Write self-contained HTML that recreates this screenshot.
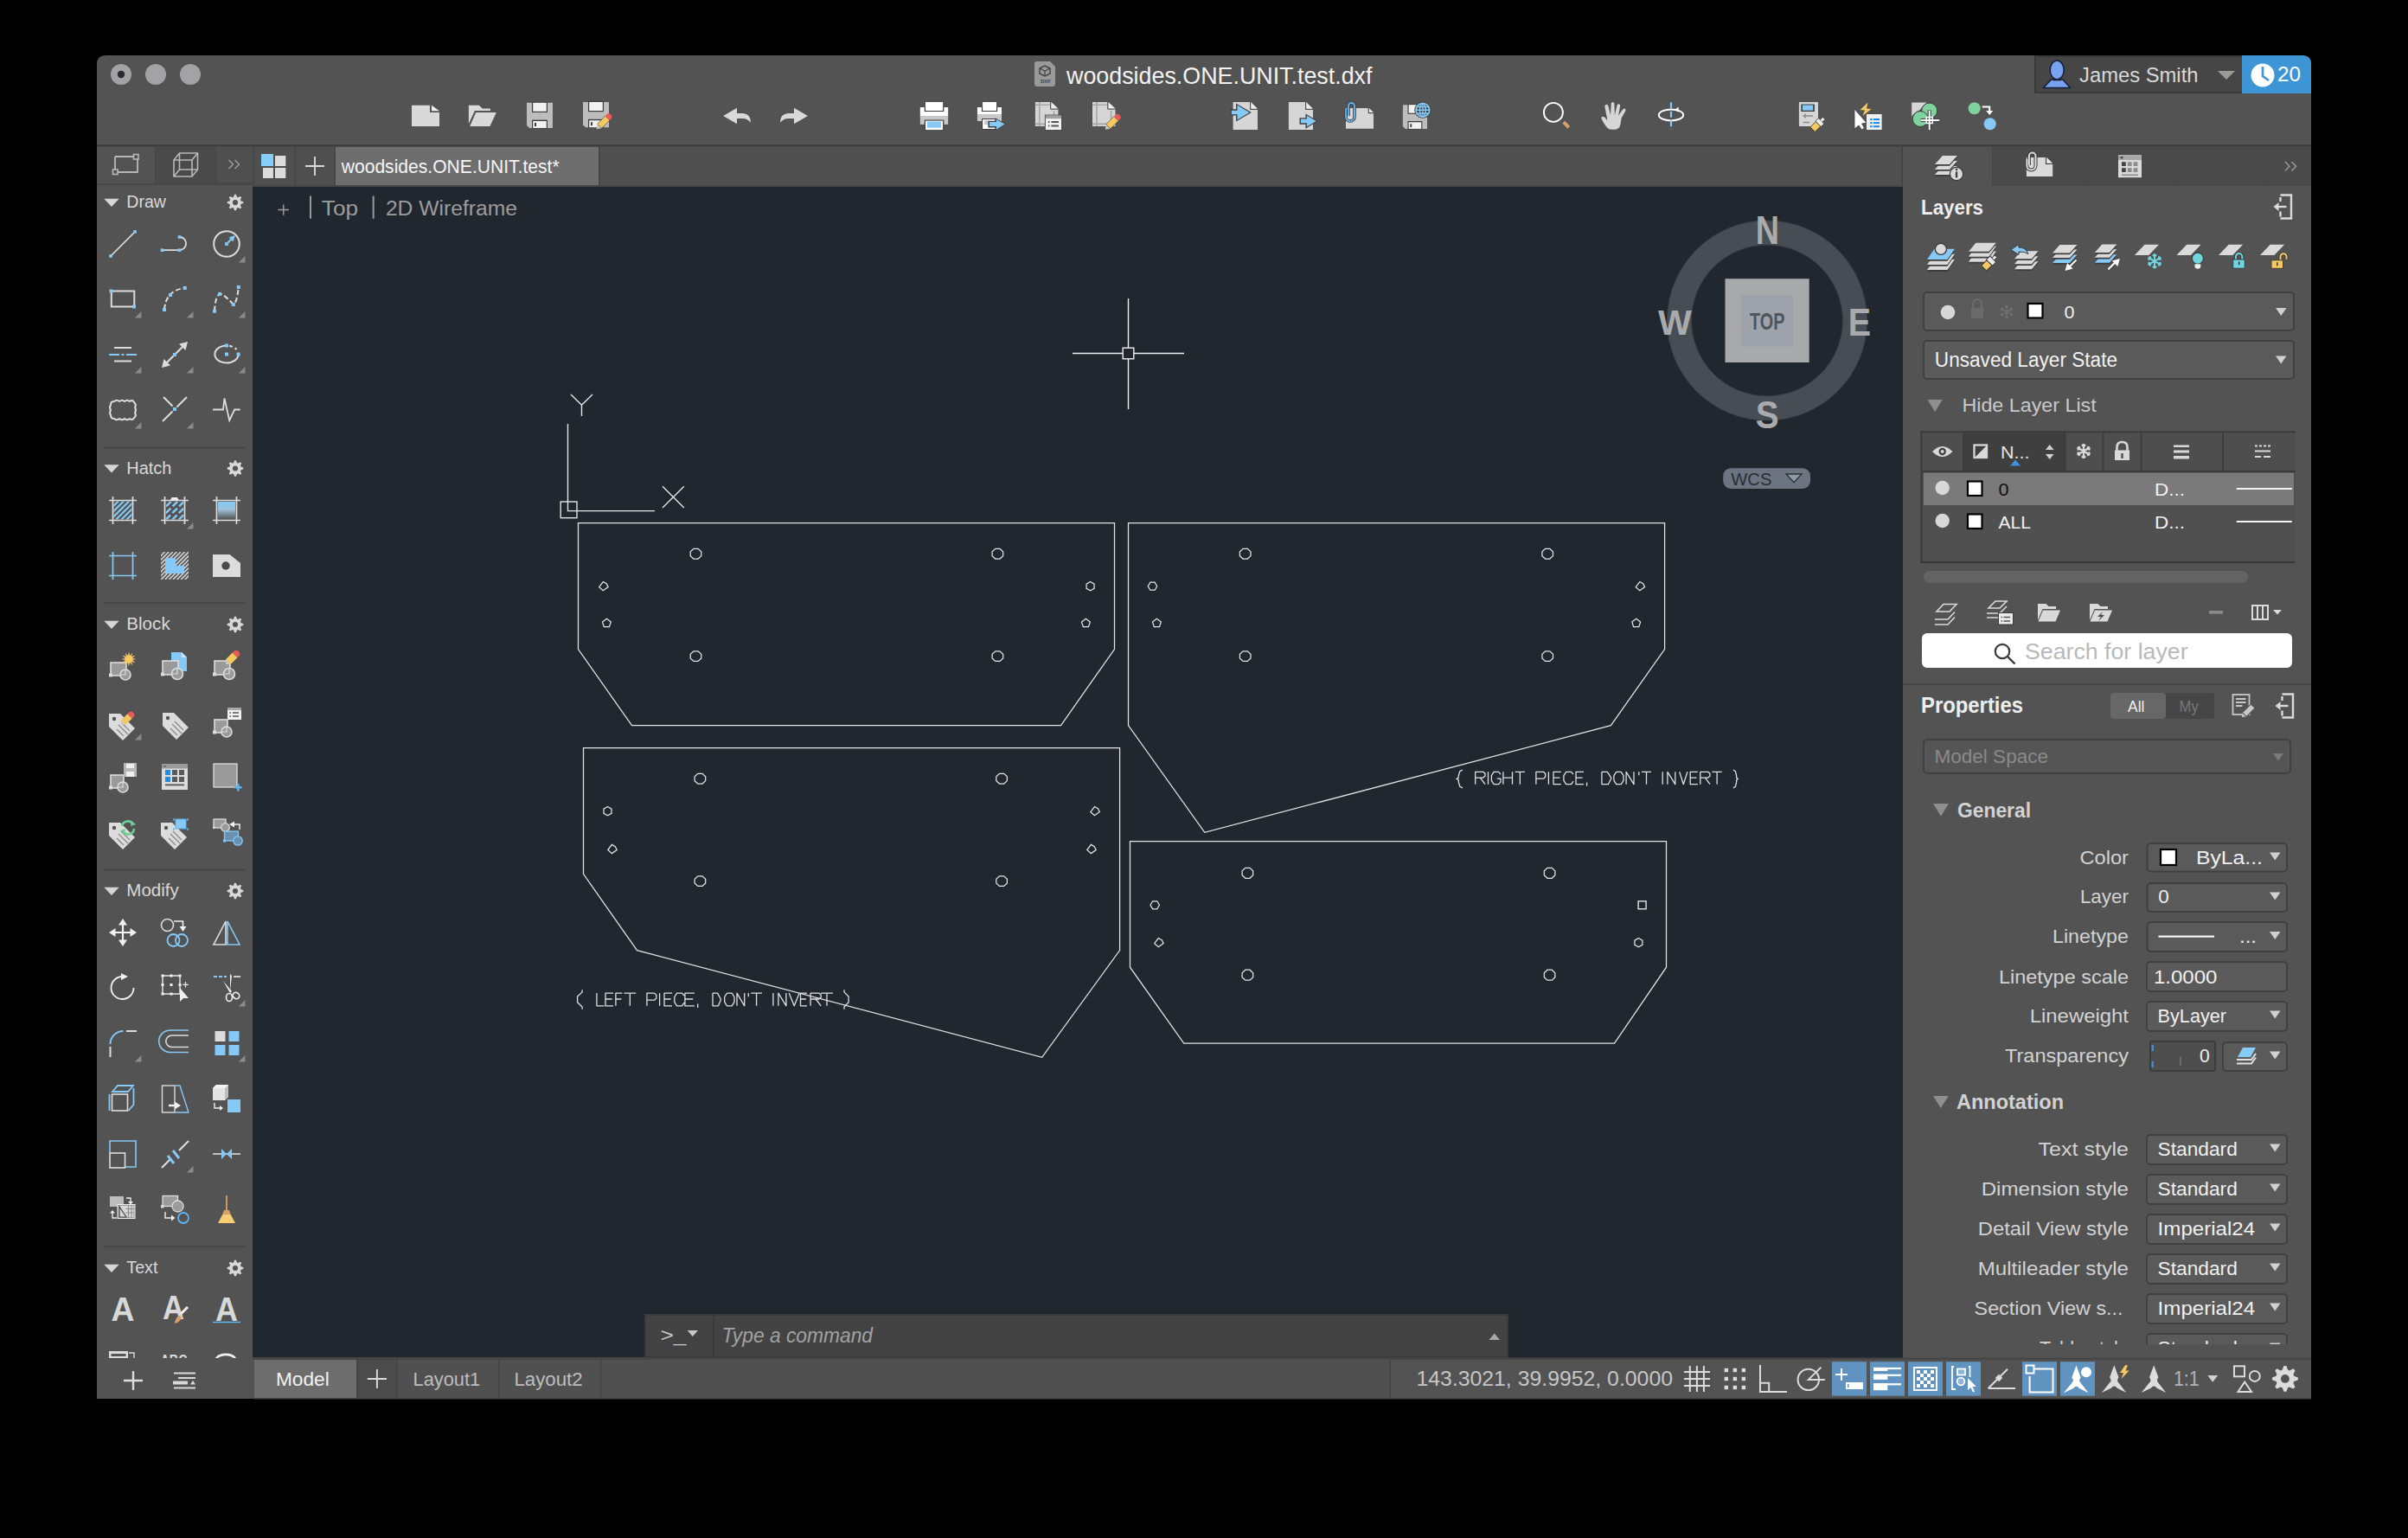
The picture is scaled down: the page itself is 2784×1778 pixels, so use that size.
<!DOCTYPE html>
<html><head><meta charset="utf-8"><style>
html,body{margin:0;padding:0;background:#000;width:#ffffffpx;height:1778px;overflow:hidden}
svg{display:block}
</style></head><body>
<svg width="#ffffff" height="1778" viewBox="0 0 #ffffff 1778">
<rect width="#ffffff" height="1778" fill="#000"/>
<path d="M112,74 Q112,64 122,64 L2662,64 Q2672,64 2672,74 L2672,1617 L112,1617 Z" fill="#535353"/><circle cx="140" cy="86" r="12" fill="#a3a2a6"/><circle cx="180" cy="86" r="12" fill="#a3a2a6"/><circle cx="220" cy="86" r="12" fill="#a3a2a6"/><circle cx="140" cy="86" r="4.2" fill="#2b2b2f"/><path d="M1196,74 Q1196,71 1199,71 L1214,71 L1220,77 L1220,97 Q1220,100 1217,100 L1199,100 Q1196,100 1196,97 Z" fill="#9a9a9a"/><path d="M1202,79 L1208,76 L1214,79 L1214,85 L1208,88 L1202,85 Z" fill="none" stroke="#444" stroke-width="1.5"/><path d="M1202,79 L1208,82 L1214,79 M1208,82 L1208,88" fill="none" stroke="#444" stroke-width="1.2"/><text x="1203" y="96" font-family="Liberation Sans" font-size="6" fill="#444" font-weight="bold" textLength="12" lengthAdjust="spacingAndGlyphs" >DXF</text><text x="1233" y="96.6" font-family="Liberation Sans" font-size="27.5" fill="#f2f2f2" textLength="353.5" lengthAdjust="spacingAndGlyphs" >woodsides.ONE.UNIT.test.dxf</text><rect x="2352" y="64" width="240" height="44" fill="#3a3a3a" /><rect x="2354" y="66" width="238" height="40" fill="#464646" /><path d="M2362.5,101.5 L2371.5,92 L2385,92 L2393.5,101.5 Z" fill="#78a2f0" stroke="#16213a" stroke-width="1.6"/><ellipse cx="2378.2" cy="81" rx="8" ry="11" fill="#78a2f0" stroke="#16213a" stroke-width="1.6"/><path d="M2373.5,92.5 L2383,92.5" stroke="#16213a" stroke-width="1.6"/><text x="2404" y="94.8" font-family="Liberation Sans" font-size="24.5" fill="#d9d9d9" textLength="137.5" lengthAdjust="spacingAndGlyphs" >James Smith</text><path d="M2564,82 L2584,82 L2574,92 Z" fill="#9a9a9a"/><path d="M2592,64 L2662,64 Q2672,64 2672,74 L2672,108 L2592,108 Z" fill="#3e95d5"/><circle cx="2616" cy="87" r="13.5" fill="#fff"/><path d="M2616,77 L2616,88 L2623,93" fill="none" stroke="#3e95d5" stroke-width="2.6"/><text x="2633" y="93.6" font-family="Liberation Sans" font-size="24" fill="#ffffff" textLength="27" lengthAdjust="spacingAndGlyphs" >20</text><rect x="112" y="167" width="2560" height="2" fill="#3e3e3e" /><rect x="112" y="169" width="2560" height="47" fill="#474747" /><rect x="694" y="170" width="1506" height="44" fill="#505050" /><rect x="112" y="170" width="67" height="42" fill="#535353" /><rect x="180" y="170" width="69" height="41" fill="#4a4a4a" /><rect x="250" y="170" width="42" height="41" fill="#4f4f4f" /><rect x="294" y="170" width="46" height="44" fill="#4f4f4f" /><rect x="342" y="170" width="44" height="44" fill="#4f4f4f" /><rect x="388" y="170" width="304" height="44" fill="#6e6e6e" /><text x="394.7" y="200.4" font-family="Liberation Sans" font-size="22.8" fill="#f5f5f5" textLength="252" lengthAdjust="spacingAndGlyphs" >woodsides.ONE.UNIT.test*</text><rect x="2200" y="169" width="472" height="46" fill="#474747" /><rect x="2200" y="170" width="103" height="46" fill="#535353" /><rect x="2304" y="170" width="104" height="44" fill="#4a4a4a" /><rect x="2409" y="170" width="104" height="44" fill="#4a4a4a" /><rect x="2514" y="170" width="109" height="44" fill="#4a4a4a" /><rect x="2624" y="170" width="48" height="44" fill="#4a4a4a" /><rect x="2198" y="169" width="2" height="47" fill="#444444" /><rect x="692" y="170" width="2" height="44" fill="#464646" /><rect x="112" y="214" width="180" height="1356" fill="#535353" /><rect x="292" y="216" width="1908" height="1354" fill="#21272f" /><rect x="2200" y="215" width="472" height="1355" fill="#535353" /><rect x="112" y="1570" width="2560" height="47" fill="#535353" /><rect x="292" y="1569" width="1380" height="2" fill="#464646" /><path d="M668.5,604.5 L1288.5,604.5 L1288.5,750.5 L1226.6,838.5 L730.5,838.5 L668.5,750.5 Z" fill="none" stroke="#e4e4e4" stroke-width="1.25" stroke-linejoin="miter"/><path d="M810.78,642.61 L807.1,646.02 L801.9,646.02 L798.22,642.61 L798.22,637.79 L801.9,634.38 L807.1,634.38 L810.78,637.79 Z" fill="none" stroke="#e4e4e4" stroke-width="1.25" stroke-linejoin="miter"/><path d="M1159.68,642.61 L1156.0,646.02 L1150.8,646.02 L1147.12,642.61 L1147.12,637.79 L1150.8,634.38 L1156.0,634.38 L1159.68,637.79 Z" fill="none" stroke="#e4e4e4" stroke-width="1.25" stroke-linejoin="miter"/><path d="M810.78,761.01 L807.1,764.42 L801.9,764.42 L798.22,761.01 L798.22,756.19 L801.9,752.78 L807.1,752.78 L810.78,756.19 Z" fill="none" stroke="#e4e4e4" stroke-width="1.25" stroke-linejoin="miter"/><path d="M1159.68,761.01 L1156.0,764.42 L1150.8,764.42 L1147.12,761.01 L1147.12,756.19 L1150.8,752.78 L1156.0,752.78 L1159.68,756.19 Z" fill="none" stroke="#e4e4e4" stroke-width="1.25" stroke-linejoin="miter"/><path d="M697.3,672.5 L701.1999999999999,674.8000000000001 L703.0999999999999,678.6 L697.3,682.7 L692.6999999999999,678.6 Z" fill="none" stroke="#e4e4e4" stroke-width="1.25" stroke-linejoin="miter"/><path d="M701.4,715.3 L706.35,718.89 L704.46,724.71 L698.34,724.71 L696.45,718.89 Z" fill="none" stroke="#e4e4e4" stroke-width="1.25" stroke-linejoin="miter"/><path d="M1260.6,672.5 L1265.1,675.1 L1265.1,680.3 L1260.6,682.9 L1256.1,680.3 L1256.1,675.1 Z" fill="none" stroke="#e4e4e4" stroke-width="1.25" stroke-linejoin="miter"/><path d="M1255.4,715.3 L1260.35,718.89 L1258.46,724.71 L1252.34,724.71 L1250.45,718.89 Z" fill="none" stroke="#e4e4e4" stroke-width="1.25" stroke-linejoin="miter"/><path d="M1304.5,604.5 L1924.6,604.5 L1924.6,750.5 L1862.4,838.6 L1392.8,962.3 L1304.5,838.6 Z" fill="none" stroke="#e4e4e4" stroke-width="1.25" stroke-linejoin="miter"/><path d="M1445.98,642.61 L1442.3,646.02 L1437.1,646.02 L1433.42,642.61 L1433.42,637.79 L1437.1,634.38 L1442.3,634.38 L1445.98,637.79 Z" fill="none" stroke="#e4e4e4" stroke-width="1.25" stroke-linejoin="miter"/><path d="M1795.48,642.61 L1791.8,646.02 L1786.6,646.02 L1782.92,642.61 L1782.92,637.79 L1786.6,634.38 L1791.8,634.38 L1795.48,637.79 Z" fill="none" stroke="#e4e4e4" stroke-width="1.25" stroke-linejoin="miter"/><path d="M1445.98,761.01 L1442.3,764.42 L1437.1,764.42 L1433.42,761.01 L1433.42,756.19 L1437.1,752.78 L1442.3,752.78 L1445.98,756.19 Z" fill="none" stroke="#e4e4e4" stroke-width="1.25" stroke-linejoin="miter"/><path d="M1795.48,761.01 L1791.8,764.42 L1786.6,764.42 L1782.92,761.01 L1782.92,756.19 L1786.6,752.78 L1791.8,752.78 L1795.48,756.19 Z" fill="none" stroke="#e4e4e4" stroke-width="1.25" stroke-linejoin="miter"/><path d="M1337.7,677.7 L1335.1,682.2 L1329.9,682.2 L1327.3,677.7 L1329.9,673.2 L1335.1,673.2 Z" fill="none" stroke="#e4e4e4" stroke-width="1.25" stroke-linejoin="miter"/><path d="M1337.4,715.3 L1342.35,718.89 L1340.46,724.71 L1334.34,724.71 L1332.45,718.89 Z" fill="none" stroke="#e4e4e4" stroke-width="1.25" stroke-linejoin="miter"/><path d="M1895.8,672.5 L1899.7,674.8000000000001 L1901.6,678.6 L1895.8,682.7 L1891.2,678.6 Z" fill="none" stroke="#e4e4e4" stroke-width="1.25" stroke-linejoin="miter"/><path d="M1891.7,715.3 L1896.65,718.89 L1894.76,724.71 L1888.64,724.71 L1886.75,718.89 Z" fill="none" stroke="#e4e4e4" stroke-width="1.25" stroke-linejoin="miter"/><path d="M674.5,864.5 L1294.6,864.5 L1294.6,1098.6 L1204.7,1222.3 L736.5,1098.6 L674.5,1010.4 Z" fill="none" stroke="#e4e4e4" stroke-width="1.25" stroke-linejoin="miter"/><path d="M815.68,902.61 L812.0,906.02 L806.8,906.02 L803.12,902.61 L803.12,897.79 L806.8,894.38 L812.0,894.38 L815.68,897.79 Z" fill="none" stroke="#e4e4e4" stroke-width="1.25" stroke-linejoin="miter"/><path d="M1164.38,902.61 L1160.7,906.02 L1155.5,906.02 L1151.82,902.61 L1151.82,897.79 L1155.5,894.38 L1160.7,894.38 L1164.38,897.79 Z" fill="none" stroke="#e4e4e4" stroke-width="1.25" stroke-linejoin="miter"/><path d="M815.68,1021.01 L812.0,1024.42 L806.8,1024.42 L803.12,1021.01 L803.12,1016.19 L806.8,1012.78 L812.0,1012.78 L815.68,1016.19 Z" fill="none" stroke="#e4e4e4" stroke-width="1.25" stroke-linejoin="miter"/><path d="M1164.38,1021.01 L1160.7,1024.42 L1155.5,1024.42 L1151.82,1021.01 L1151.82,1016.19 L1155.5,1012.78 L1160.7,1012.78 L1164.38,1016.19 Z" fill="none" stroke="#e4e4e4" stroke-width="1.25" stroke-linejoin="miter"/><path d="M702.5,932.5 L707.0,935.1 L707.0,940.3 L702.5,942.9 L698.0,940.3 L698.0,935.1 Z" fill="none" stroke="#e4e4e4" stroke-width="1.25" stroke-linejoin="miter"/><path d="M707.4,976.4 L711.3,978.7 L713.1999999999999,982.5 L707.4,986.6 L702.8,982.5 Z" fill="none" stroke="#e4e4e4" stroke-width="1.25" stroke-linejoin="miter"/><path d="M1265.5,932.5 L1269.4,934.8000000000001 L1271.3,938.6 L1265.5,942.7 L1260.9,938.6 Z" fill="none" stroke="#e4e4e4" stroke-width="1.25" stroke-linejoin="miter"/><path d="M1261.4,976.4 L1265.3000000000002,978.7 L1267.2,982.5 L1261.4,986.6 L1256.8000000000002,982.5 Z" fill="none" stroke="#e4e4e4" stroke-width="1.25" stroke-linejoin="miter"/><path d="M1306.5,972.5 L1926.5,972.5 L1926.5,1118.2 L1866.5,1206.2 L1368.7,1206.2 L1306.5,1118.2 Z" fill="none" stroke="#e4e4e4" stroke-width="1.25" stroke-linejoin="miter"/><path d="M1448.68,1011.79 L1445.0,1015.31 L1439.8,1015.31 L1436.12,1011.79 L1436.12,1006.81 L1439.8,1003.29 L1445.0,1003.29 L1448.68,1006.81 Z" fill="none" stroke="#e4e4e4" stroke-width="1.25" stroke-linejoin="miter"/><path d="M1797.88,1011.79 L1794.2,1015.31 L1789.0,1015.31 L1785.32,1011.79 L1785.32,1006.81 L1789.0,1003.29 L1794.2,1003.29 L1797.88,1006.81 Z" fill="none" stroke="#e4e4e4" stroke-width="1.25" stroke-linejoin="miter"/><path d="M1448.68,1129.69 L1445.0,1133.21 L1439.8,1133.21 L1436.12,1129.69 L1436.12,1124.71 L1439.8,1121.19 L1445.0,1121.19 L1448.68,1124.71 Z" fill="none" stroke="#e4e4e4" stroke-width="1.25" stroke-linejoin="miter"/><path d="M1797.88,1129.69 L1794.2,1133.21 L1789.0,1133.21 L1785.32,1129.69 L1785.32,1124.71 L1789.0,1121.19 L1794.2,1121.19 L1797.88,1124.71 Z" fill="none" stroke="#e4e4e4" stroke-width="1.25" stroke-linejoin="miter"/><path d="M1340.4,1046.3 L1337.8,1050.8 L1332.6,1050.8 L1330.0,1046.3 L1332.6,1041.8 L1337.8,1041.8 Z" fill="none" stroke="#e4e4e4" stroke-width="1.25" stroke-linejoin="miter"/><path d="M1339.3,1084.5 L1343.2,1086.8 L1345.1,1090.6000000000001 L1339.3,1094.7 L1334.7,1090.6000000000001 Z" fill="none" stroke="#e4e4e4" stroke-width="1.25" stroke-linejoin="miter"/><path d="M1894.4,1084.5 L1898.9,1087.1 L1898.9,1092.3 L1894.4,1094.9 L1889.9,1092.3 L1889.9,1087.1 Z" fill="none" stroke="#e4e4e4" stroke-width="1.25" stroke-linejoin="miter"/><rect x="1894.1" y="1041.8" width="9" height="9" fill="none" stroke="#e4e4e4" stroke-width="1.4"/><path d="M1691,890.0 L1687.85,891.67 L1686.45,896.27 L1686.1,899.4 L1684,900.45 L1686.1,901.5 L1686.45,904.63 L1687.85,909.23 L1691,910.9 M1705.7,906.7 L1705.7,892.3 L1714.74,892.3 L1717.0,894.32 L1717.0,897.05 L1714.74,899.07 L1705.7,899.07 M1711.35,899.07 L1717.0,906.7 M1720.5,892.3 L1720.5,906.7 M1735.0,895.18 L1732.67,892.3 L1727.05,892.3 L1724.4,896.62 L1724.4,902.38 L1727.05,906.7 L1732.67,906.7 L1735.0,903.82 L1735.0,900.22 L1730.76,900.22 M1737.9,892.3 L1737.9,906.7 M1748.5,892.3 L1748.5,906.7 M1737.9,899.07 L1748.5,899.07 M1751.8,892.3 L1762.9,892.3 M1757.35,892.3 L1757.35,906.7 M1775.9,906.7 L1775.9,892.3 L1784.54,892.3 L1786.7,894.46 L1786.7,898.06 L1784.54,900.22 L1775.9,900.22 M1790.4,892.3 L1790.4,906.7 M1804.8,892.3 L1796.0,892.3 L1796.0,906.7 L1804.8,906.7 M1796.0,899.07 L1803.48,899.07 M1819.0,895.18 L1816.56,892.3 L1810.68,892.3 L1807.9,896.62 L1807.9,902.38 L1810.68,906.7 L1816.56,906.7 L1819.0,903.1 M1831,892.3 L1822,892.3 L1822,906.7 L1831,906.7 M1822,899.07 L1829.65,899.07 M1834.6,904.54 L1834.6,908.86 M1851.9,892.3 L1851.9,906.7 L1859.39,906.7 L1862.6,900.22 L1862.6,898.78 L1858.32,892.3 L1851.9,892.3 M1868.68,892.3 L1874.23,892.3 L1877.0,896.62 L1877.0,902.38 L1874.23,906.7 L1868.68,906.7 L1865.9,902.38 L1865.9,896.62 L1868.68,892.3 M1880.1,906.7 L1880.1,892.3 L1889.0,906.7 L1889.0,892.3 M1894.8,892.3 L1894.8,896.33 M1898,892.3 L1909,892.3 M1903.5,892.3 L1903.5,906.7 M1922.2,892.3 L1922.2,906.7 M1927.9,906.7 L1927.9,892.3 L1936.8,906.7 L1936.8,892.3 M1941.7,892.3 L1946.3,906.7 L1950.9,892.3 M1962.8,892.3 L1954.2,892.3 L1954.2,906.7 L1962.8,906.7 M1954.2,899.07 L1961.51,899.07 M1965.8,906.7 L1965.8,892.3 L1974.76,892.3 L1977.0,894.32 L1977.0,897.05 L1974.76,899.07 L1965.8,899.07 M1971.4,899.07 L1977.0,906.7 M1979.5,892.3 L1990.7,892.3 M1985.1,892.3 L1985.1,906.7 M2004.0,890.0 L2006.43,891.67 L2007.51,896.27 L2007.78,899.4 L2009.4,900.45 L2007.78,901.5 L2007.51,904.63 L2006.43,909.23 L2004.0,910.9" fill="none" stroke="#e0e0e0" stroke-width="1.3" stroke-linejoin="round"/><path d="M673.1,1144.2 L673.1,1146.9 L667.6,1152.08 L667.6,1158.83 L673.1,1164.0 L673.1,1166.7 M689.9,1148.1 L689.9,1162.8 L698.6,1162.8 M709,1148.1 L700,1148.1 L700,1162.8 L709,1162.8 M700,1155.01 L707.65,1155.01 M719.4,1148.1 L711.9,1148.1 L711.9,1162.8 M711.9,1155.01 L718.27,1155.01 M721.5,1148.1 L735.2,1148.1 M728.35,1148.1 L728.35,1162.8 M747.9,1162.8 L747.9,1148.1 L756.62,1148.1 L758.8,1150.3 L758.8,1153.98 L756.62,1156.18 L747.9,1156.18 M762.6,1148.1 L762.6,1162.8 M777,1148.1 L768,1148.1 L768,1162.8 L777,1162.8 M768,1155.01 L775.65,1155.01 M791.0,1151.04 L788.54,1148.1 L782.6,1148.1 L779.8,1152.51 L779.8,1158.39 L782.6,1162.8 L788.54,1162.8 L791.0,1159.12 M802.9,1148.1 L791.9,1148.1 L791.9,1162.8 L802.9,1162.8 M791.9,1155.01 L801.25,1155.01 M806.7,1160.6 L806.7,1165.0 M824.0,1148.1 L824.0,1162.8 L830.44,1162.8 L833.2,1156.18 L833.2,1154.71 L829.52,1148.1 L824.0,1148.1 M840.53,1148.1 L846.18,1148.1 L849.0,1152.51 L849.0,1158.39 L846.18,1162.8 L840.53,1162.8 L837.7,1158.39 L837.7,1152.51 L840.53,1148.1 M852.0,1162.8 L852.0,1148.1 L860.7,1162.8 L860.7,1148.1 M865.3,1148.1 L865.3,1152.22 M868.2,1148.1 L881.0,1148.1 M874.6,1148.1 L874.6,1162.8 M893.9,1148.1 L893.9,1162.8 M899.9,1162.8 L899.9,1148.1 L908.9,1162.8 L908.9,1148.1 M912.2,1148.1 L918.2,1162.8 L924.2,1148.1 M933.0,1148.1 L925.5,1148.1 L925.5,1162.8 L933.0,1162.8 M925.5,1155.01 L931.88,1155.01 M937.1,1162.8 L937.1,1148.1 L946.78,1148.1 L949.2,1150.16 L949.2,1152.95 L946.78,1155.01 L937.1,1155.01 M943.15,1155.01 L949.2,1162.8 M949.0,1148.1 L962.9,1148.1 M955.95,1148.1 L955.95,1162.8 M976.0,1144.2 L976.0,1146.9 L981.1,1152.08 L981.1,1158.83 L976.0,1164.0 L976.0,1166.7" fill="none" stroke="#e0e0e0" stroke-width="1.3" stroke-linejoin="round"/><path d="M656.5,490 L656.5,590.6 L757,590.6" fill="none" stroke="#e4e4e4" stroke-width="1.4"/><rect x="648.2" y="580" width="18.8" height="18.7" fill="none" stroke="#e4e4e4" stroke-width="1.4"/><path d="M660,456 L672.5,468.3 L685,456 M672.5,468.3 L672.5,481" fill="none" stroke="#e4e4e4" stroke-width="1.4"/><path d="M766,562.2 L790.8,587 M790.8,562.2 L766,587" fill="none" stroke="#e4e4e4" stroke-width="1.4"/><path d="M1304.5,345 L1304.5,402 M1304.5,415 L1304.5,473 M1240,408.5 L1298,408.5 M1311,408.5 L1369,408.5" fill="none" stroke="#f0f0f0" stroke-width="1.4"/><rect x="1298.2" y="402.2" width="12.6" height="12.6" fill="none" stroke="#f0f0f0" stroke-width="1.4"/><path d="M321.5,242.6 L334,242.6 M327.7,236.4 L327.7,248.8" stroke="#9a9a9a" stroke-width="1.5"/><path d="M359,226.4 L359,252.8 M431.7,226.4 L431.7,252.8" stroke="#9a9a9a" stroke-width="2"/><text x="371.8" y="249" font-family="Liberation Sans" font-size="23" fill="#9c9c9c" textLength="42.2" lengthAdjust="spacingAndGlyphs" >Top</text><text x="445.9" y="249" font-family="Liberation Sans" font-size="23" fill="#9c9c9c" textLength="152.1" lengthAdjust="spacingAndGlyphs" >2D Wireframe</text><circle cx="2043" cy="370.5" r="101.5" fill="none" stroke="#474d55" stroke-width="28"/><circle cx="2043" cy="370.5" r="115.5" fill="none" stroke="#3a4048" stroke-width="1"/><circle cx="2043" cy="370.5" r="87.5" fill="none" stroke="#3a4048" stroke-width="1"/><rect x="1994.5" y="322.2" width="97.2" height="96.8" fill="#a8a9ab" /><rect x="2013" y="341" width="60" height="59.7" fill="#9ea3ab" /><text x="2023" y="380.7" font-family="Liberation Sans" font-size="27" fill="#50555c" font-weight="bold" textLength="40.4" lengthAdjust="spacingAndGlyphs" >TOP</text><text x="2029.7" y="282.4" font-family="Liberation Sans" font-size="46" fill="#a9aaac" font-weight="bold" textLength="27.3" lengthAdjust="spacingAndGlyphs" >N</text><text x="1917" y="386.6" font-family="Liberation Sans" font-size="41" fill="#a9aaac" font-weight="bold" textLength="38.8" lengthAdjust="spacingAndGlyphs" >W</text><text x="2136.7" y="387.5" font-family="Liberation Sans" font-size="45" fill="#a9aaac" font-weight="bold" textLength="26.3" lengthAdjust="spacingAndGlyphs" >E</text><text x="2029.7" y="495.2" font-family="Liberation Sans" font-size="44" fill="#a9aaac" font-weight="bold" textLength="26.9" lengthAdjust="spacingAndGlyphs" >S</text><rect x="1992.2" y="541.2" width="100.8" height="23.8" fill="#6b7480" rx="9" /><text x="2001.3" y="560.5" font-family="Liberation Sans" font-size="20.5" fill="#2a2e35" textLength="47.1" lengthAdjust="spacingAndGlyphs" >WCS</text><path d="M2065,548 L2083,548 L2074,557.8 Z" fill="#8c9aa6" stroke="#2a2e35" stroke-width="1.3"/><rect x="746" y="1520" width="997" height="49" fill="#434343" stroke="#3a3a3a" stroke-width="2" /><rect x="824" y="1521" width="2" height="47" fill="#3a3a3a" /><text x="763.5" y="1551" font-family="Liberation Sans" font-size="22" fill="#c8c8c8" textLength="30" lengthAdjust="spacingAndGlyphs" >>_</text><path d="M794.7,1538 L807,1538 L800.8,1545 Z" fill="#c8c8c8"/><text x="834.6" y="1552" font-family="Liberation Sans" font-size="23" fill="#a2a2a2" font-style="italic" textLength="174.4" lengthAdjust="spacingAndGlyphs" >Type a command</text><path d="M1721.5,1549 L1734,1549 L1727.7,1541.5 Z" fill="#a8a8a8"/><text x="2221" y="248.4" font-family="Liberation Sans" font-size="24.5" fill="#eeeeee" font-weight="bold" textLength="72" lengthAdjust="spacingAndGlyphs" >Layers</text><rect x="2224" y="338" width="428" height="44" fill="#5a5a5a" rx="4" stroke="#404040" stroke-width="2" /><circle cx="2252" cy="361" r="8.3" fill="#d6d6d6"/><path d="M2281,357 L2281,352 Q2281,346 2286,346 Q2291,346 2291,352 L2291,357" fill="none" stroke="#6a6a6a" stroke-width="2.2"/><rect x="2279" y="356" width="14" height="12" fill="#6a6a6a" /><path d="M2320.00,352.50 L2320.00,368.50 M2326.93,356.50 L2313.07,364.50 M2326.93,364.50 L2313.07,356.50 M2320.00,365.46 L2321.98,367.44 M2320.00,365.46 L2318.02,367.44 M2315.70,362.98 L2314.98,365.68 M2315.70,362.98 L2313.00,362.26 M2315.70,358.02 L2313.00,358.74 M2315.70,358.02 L2314.98,355.32 M2320.00,355.54 L2318.02,353.56 M2320.00,355.54 L2321.98,353.56 M2324.30,358.02 L2325.02,355.32 M2324.30,358.02 L2327.00,358.74 M2324.30,362.98 L2327.00,362.26 M2324.30,362.98 L2325.02,365.68 " stroke="#6e6e6e" stroke-width="1.8" fill="none"/><rect x="2344.5" y="351" width="17" height="16.5" fill="#ffffff" stroke="#000" stroke-width="2.2" /><text x="2386.6" y="367.7" font-family="Liberation Sans" font-size="21" fill="#f0f0f0" textLength="12" lengthAdjust="spacingAndGlyphs" >0</text><path d="M2631,356 L2643.5,356 L2637.25,365 Z" fill="#d0d0d0"/><rect x="2224" y="394" width="428" height="44" fill="#5a5a5a" rx="4" stroke="#404040" stroke-width="2" /><text x="2236.8" y="424.3" font-family="Liberation Sans" font-size="23" fill="#f2f2f2" textLength="211.2" lengthAdjust="spacingAndGlyphs" >Unsaved Layer State</text><path d="M2631,411.5 L2643.5,411.5 L2637.25,420.5 Z" fill="#d0d0d0"/><path d="M2228.6,462 L2245.7,462 L2237.2,476.3 Z" fill="#8e8e8e"/><text x="2268.4" y="476.3" font-family="Liberation Sans" font-size="22.5" fill="#c9c9c9" textLength="155.3" lengthAdjust="spacingAndGlyphs" >Hide Layer List</text><rect x="2220.5" y="498.5" width="433" height="152.5" fill="#505050" /><rect x="2220.5" y="498.5" width="433" height="2" fill="#393939" /><rect x="2220.5" y="649" width="433" height="2" fill="#393939" /><rect x="2220.5" y="498.5" width="2" height="152.5" fill="#393939" /><rect x="2222.5" y="500.5" width="431" height="44" fill="#4e4e4e" /><rect x="2270" y="500.5" width="117" height="44" fill="#3f3f3f" /><rect x="2269" y="500.5" width="2" height="44" fill="#3c3c3c" /><rect x="2386.5" y="500.5" width="2" height="44" fill="#3c3c3c" /><rect x="2430.5" y="500.5" width="2" height="44" fill="#3c3c3c" /><rect x="2474.5" y="500.5" width="2" height="44" fill="#3c3c3c" /><rect x="2569" y="500.5" width="2" height="44" fill="#3c3c3c" /><rect x="2222.5" y="544" width="431" height="2.5" fill="#3a3a3a" /><rect x="2224" y="546.5" width="428" height="37.5" fill="#7a7a7a" /><path d="M2234,522 Q2245.7,510 2257.4,522 Q2245.7,534 2234,522 Z" fill="#d8d8d8"/><circle cx="2245.7" cy="522" r="4.2" fill="#3f3f3f"/><circle cx="2245.7" cy="522" r="2" fill="#d8d8d8"/><rect x="2282.5" y="514.5" width="14.5" height="14.5" fill="none" stroke="#d8d8d8" stroke-width="2.3"/><path d="M2283,529 L2297,515 L2297,529 Z" fill="#d8d8d8"/><text x="2313" y="529.7" font-family="Liberation Sans" font-size="21" fill="#e6e6e6" textLength="33.4" lengthAdjust="spacingAndGlyphs" >N...</text><path d="M2365,520 L2374.5,520 L2369.7,514 Z M2365,525 L2374.5,525 L2369.7,531 Z" fill="#d0d0d0"/><path d="M2324,538.5 L2336,538.5 L2330,531.5 Z" fill="#3d93e0"/><path d="M2409.00,513.00 L2409.00,530.00 M2416.36,517.25 L2401.64,525.75 M2416.36,525.75 L2401.64,517.25 M2409.00,526.77 L2411.10,528.87 M2409.00,526.77 L2406.90,528.87 M2404.44,524.13 L2403.67,527.01 M2404.44,524.13 L2401.56,523.37 M2404.44,518.87 L2401.56,519.63 M2404.44,518.87 L2403.67,515.99 M2409.00,516.23 L2406.90,514.13 M2409.00,516.23 L2411.10,514.13 M2413.56,518.87 L2414.33,515.99 M2413.56,518.87 L2416.44,519.63 M2413.56,524.13 L2416.44,523.37 M2413.56,524.13 L2414.33,527.01 " stroke="#d8d8d8" stroke-width="2.2" fill="none"/><path d="M2447.5,522 L2447.5,517 Q2447.5,511 2453.5,511 Q2459.5,511 2459.5,517 L2459.5,522" fill="none" stroke="#d8d8d8" stroke-width="2.6"/><rect x="2445" y="520.5" width="17" height="11.5" fill="#d8d8d8" /><rect x="2452.3" y="524" width="2.4" height="6" fill="#4c4c4c" /><rect x="2513" y="514.5" width="18" height="2.5" fill="#d8d8d8" /><rect x="2513" y="520.5" width="18" height="3" fill="#d8d8d8" /><rect x="2513" y="527" width="18" height="3.5" fill="#d8d8d8" /><rect x="2607" y="514.5" width="3" height="2" fill="#d8d8d8" /><rect x="2612" y="514.5" width="3" height="2" fill="#d8d8d8" /><rect x="2617" y="514.5" width="3" height="2" fill="#d8d8d8" /><rect x="2622" y="514.5" width="3" height="2" fill="#d8d8d8" /><rect x="2607" y="520.5" width="18" height="2" fill="#d8d8d8" /><rect x="2607" y="527" width="7" height="2" fill="#d8d8d8" /><rect x="2617" y="527" width="8" height="2" fill="#d8d8d8" /><circle cx="2245.7" cy="564" r="8.2" fill="#d8d8d8"/><rect x="2275" y="556.5" width="16.5" height="16.5" fill="#ffffff" stroke="#000" stroke-width="2.2" /><text x="2310.6" y="572.5" font-family="Liberation Sans" font-size="21" fill="#111111" textLength="12" lengthAdjust="spacingAndGlyphs" >0</text><text x="2491" y="572.5" font-family="Liberation Sans" font-size="21" fill="#f0f0f0" textLength="35" lengthAdjust="spacingAndGlyphs" >D...</text><rect x="2585.8" y="564" width="64" height="2" fill="#f5f5f5" /><circle cx="2245.7" cy="602" r="8.2" fill="#d8d8d8"/><rect x="2275" y="594.5" width="16.5" height="16.5" fill="#ffffff" stroke="#000" stroke-width="2.2" /><text x="2310.6" y="610.5" font-family="Liberation Sans" font-size="21" fill="#f0f0f0" textLength="37.4" lengthAdjust="spacingAndGlyphs" >ALL</text><text x="2491" y="610.5" font-family="Liberation Sans" font-size="21" fill="#f0f0f0" textLength="35" lengthAdjust="spacingAndGlyphs" >D...</text><rect x="2585.8" y="602" width="64" height="2" fill="#f5f5f5" /><rect x="2224" y="660" width="375" height="13.7" fill="#636363" rx="6.8" /><!--LAYERTOOLS--><rect x="2222" y="732" width="428" height="40" fill="#ffffff" rx="6" /><circle cx="2315" cy="753" r="8.2" fill="none" stroke="#3a3a3a" stroke-width="2.2"/><path d="M2321,759 L2329.5,767.5" stroke="#3a3a3a" stroke-width="2.4"/><text x="2341" y="762" font-family="Liberation Sans" font-size="25" fill="#b9b9b9" textLength="188.6" lengthAdjust="spacingAndGlyphs" >Search for layer</text><rect x="2200" y="790" width="472" height="2" fill="#464646" /><text x="2221" y="824.2" font-family="Liberation Sans" font-size="25" fill="#eeeeee" font-weight="bold" textLength="118" lengthAdjust="spacingAndGlyphs" >Properties</text><rect x="2440" y="801" width="120" height="30" fill="#464646" rx="4" /><rect x="2440" y="801" width="64" height="30" fill="#676767" rx="4" /><text x="2460" y="823" font-family="Liberation Sans" font-size="18.5" fill="#f0f0f0" textLength="19.4" lengthAdjust="spacingAndGlyphs" >All</text><text x="2519.6" y="823" font-family="Liberation Sans" font-size="18.5" fill="#777777" textLength="22.2" lengthAdjust="spacingAndGlyphs" >My</text><rect x="2224" y="855" width="424" height="39" fill="#555555" rx="4" stroke="#404040" stroke-width="2" /><text x="2236.5" y="882" font-family="Liberation Sans" font-size="22.5" fill="#8a8a8a" textLength="131.5" lengthAdjust="spacingAndGlyphs" >Model Space</text><path d="M2628,871 L2640,871 L2634.0,879.5 Z" fill="#7a7a7a"/><path d="M2235,929 L2253,929 L2244,943.7 Z" fill="#8e8e8e"/><text x="2263" y="944.8" font-family="Liberation Sans" font-size="23.5" fill="#d2d2d2" font-weight="bold" textLength="85" lengthAdjust="spacingAndGlyphs" >General</text><text x="2404.4" y="999" font-family="Liberation Sans" font-size="22.5" fill="#d2d2d2" textLength="56.6" lengthAdjust="spacingAndGlyphs" >Color</text><text x="2404.9" y="1044.4" font-family="Liberation Sans" font-size="22.5" fill="#d2d2d2" textLength="56.1" lengthAdjust="spacingAndGlyphs" >Layer</text><text x="2373" y="1089.7" font-family="Liberation Sans" font-size="22.5" fill="#d2d2d2" textLength="88" lengthAdjust="spacingAndGlyphs" >Linetype</text><text x="2311" y="1136.6" font-family="Liberation Sans" font-size="22.5" fill="#d2d2d2" textLength="150" lengthAdjust="spacingAndGlyphs" >Linetype scale</text><text x="2346.7" y="1182.4" font-family="Liberation Sans" font-size="22.5" fill="#d2d2d2" textLength="114.3" lengthAdjust="spacingAndGlyphs" >Lineweight</text><text x="2318" y="1228.2" font-family="Liberation Sans" font-size="22.5" fill="#d2d2d2" textLength="143" lengthAdjust="spacingAndGlyphs" >Transparency</text><rect x="2482.6" y="975" width="161.4" height="32.5" fill="#5a5a5a" rx="4" stroke="#404040" stroke-width="2" /><rect x="2498" y="982" width="18" height="18" fill="#ffffff" stroke="#000" stroke-width="2.2" /><text x="2539" y="999" font-family="Liberation Sans" font-size="22.5" fill="#f0f0f0" textLength="77" lengthAdjust="spacingAndGlyphs" >ByLa...</text><path d="M2624,985.5 L2636.5,985.5 L2630.25,994.5 Z" fill="#d0d0d0"/><rect x="2482.6" y="1021" width="161.4" height="33" fill="#5a5a5a" rx="4" stroke="#404040" stroke-width="2" /><text x="2495.3" y="1044.4" font-family="Liberation Sans" font-size="22.5" fill="#f0f0f0" textLength="12.5" lengthAdjust="spacingAndGlyphs" >0</text><path d="M2624,1031.5 L2636.5,1031.5 L2630.25,1040.5 Z" fill="#d0d0d0"/><rect x="2482.6" y="1066" width="161.4" height="34" fill="#5a5a5a" rx="4" stroke="#404040" stroke-width="2" /><rect x="2495.5" y="1081.5" width="64.5" height="2.2" fill="#f5f5f5" /><text x="2589" y="1089.7" font-family="Liberation Sans" font-size="22.5" fill="#f0f0f0" textLength="20" lengthAdjust="spacingAndGlyphs" >...</text><path d="M2624,1077 L2636.5,1077 L2630.25,1086 Z" fill="#d0d0d0"/><rect x="2482" y="1112" width="162" height="34" fill="#5a5a5a" rx="4" stroke="#404040" stroke-width="2" /><text x="2490" y="1136.6" font-family="Liberation Sans" font-size="22.5" fill="#f0f0f0" textLength="73.4" lengthAdjust="spacingAndGlyphs" >1.0000</text><rect x="2482" y="1158" width="162" height="34" fill="#5a5a5a" rx="4" stroke="#404040" stroke-width="2" /><text x="2494.6" y="1182.4" font-family="Liberation Sans" font-size="22.5" fill="#f0f0f0" textLength="79.4" lengthAdjust="spacingAndGlyphs" >ByLayer</text><path d="M2624,1168.5 L2636.5,1168.5 L2630.25,1177.5 Z" fill="#d0d0d0"/><rect x="2486" y="1204" width="75" height="34" fill="#4e4e4e" rx="2" stroke="#3c3c3c" stroke-width="2" /><rect x="2487.5" y="1208" width="2.5" height="7" fill="#3f8fe0" /><rect x="2487.5" y="1227" width="2.5" height="7" fill="#3f8fe0" /><rect x="2520.5" y="1222" width="1" height="10" fill="#8a8a8a" /><text x="2543" y="1228.2" font-family="Liberation Sans" font-size="22.5" fill="#f0f0f0" textLength="11.7" lengthAdjust="spacingAndGlyphs" >0</text><rect x="2570" y="1205" width="74" height="33" fill="#5a5a5a" rx="4" stroke="#404040" stroke-width="2" /><path d="M2587,1222 L2593,1211 L2608,1211 L2602,1222 Z" fill="#86cbf6"/><path d="M2586,1225 L2603,1225 L2608,1218" fill="none" stroke="#e0e0e0" stroke-width="2"/><path d="M2586,1229.5 L2603,1229.5 L2608,1222.5" fill="none" stroke="#e0e0e0" stroke-width="2"/><path d="M2624,1215.5 L2636.5,1215.5 L2630.25,1224.5 Z" fill="#d0d0d0"/><path d="M2235,1267 L2252.7,1267 L2243.8,1281 Z" fill="#8e8e8e"/><text x="2262" y="1282" font-family="Liberation Sans" font-size="23.5" fill="#d2d2d2" font-weight="bold" textLength="124" lengthAdjust="spacingAndGlyphs" >Annotation</text><clipPath id="pclip"><rect x="2200" y="215" width="472" height="1339"/></clipPath><g clip-path="url(#pclip)"><text x="2356.5" y="1336" font-family="Liberation Sans" font-size="22.5" fill="#d2d2d2" textLength="104.5" lengthAdjust="spacingAndGlyphs" >Text style</text><rect x="2482" y="1312" width="162" height="34" fill="#5a5a5a" rx="4" stroke="#404040" stroke-width="2" /><text x="2494.6" y="1336" font-family="Liberation Sans" font-size="22.5" fill="#f0f0f0" textLength="92.2" lengthAdjust="spacingAndGlyphs" >Standard</text><path d="M2624,1322.5 L2636.5,1322.5 L2630.25,1331.5 Z" fill="#d0d0d0"/><text x="2290.7" y="1381.8" font-family="Liberation Sans" font-size="22.5" fill="#d2d2d2" textLength="170.3" lengthAdjust="spacingAndGlyphs" >Dimension style</text><rect x="2482" y="1358" width="162" height="34" fill="#5a5a5a" rx="4" stroke="#404040" stroke-width="2" /><text x="2494.6" y="1381.8" font-family="Liberation Sans" font-size="22.5" fill="#f0f0f0" textLength="92.2" lengthAdjust="spacingAndGlyphs" >Standard</text><path d="M2624,1368.5 L2636.5,1368.5 L2630.25,1377.5 Z" fill="#d0d0d0"/><text x="2286.7" y="1428.2" font-family="Liberation Sans" font-size="22.5" fill="#d2d2d2" textLength="174.3" lengthAdjust="spacingAndGlyphs" >Detail View style</text><rect x="2482" y="1404" width="162" height="34" fill="#5a5a5a" rx="4" stroke="#404040" stroke-width="2" /><text x="2494.6" y="1428.2" font-family="Liberation Sans" font-size="22.5" fill="#f0f0f0" textLength="112.6" lengthAdjust="spacingAndGlyphs" >Imperial24</text><path d="M2624,1414.5 L2636.5,1414.5 L2630.25,1423.5 Z" fill="#d0d0d0"/><text x="2286.7" y="1474.2" font-family="Liberation Sans" font-size="22.5" fill="#d2d2d2" textLength="174.3" lengthAdjust="spacingAndGlyphs" >Multileader style</text><rect x="2482" y="1450" width="162" height="34" fill="#5a5a5a" rx="4" stroke="#404040" stroke-width="2" /><text x="2494.6" y="1474.2" font-family="Liberation Sans" font-size="22.5" fill="#f0f0f0" textLength="92.2" lengthAdjust="spacingAndGlyphs" >Standard</text><path d="M2624,1460.5 L2636.5,1460.5 L2630.25,1469.5 Z" fill="#d0d0d0"/><text x="2282.6" y="1520" font-family="Liberation Sans" font-size="22.5" fill="#d2d2d2" textLength="171.9" lengthAdjust="spacingAndGlyphs" >Section View s...</text><rect x="2482" y="1496" width="162" height="34" fill="#5a5a5a" rx="4" stroke="#404040" stroke-width="2" /><text x="2494.6" y="1520" font-family="Liberation Sans" font-size="22.5" fill="#f0f0f0" textLength="112.6" lengthAdjust="spacingAndGlyphs" >Imperial24</text><path d="M2624,1506.5 L2636.5,1506.5 L2630.25,1515.5 Z" fill="#d0d0d0"/><text x="2358" y="1566" font-family="Liberation Sans" font-size="22.5" fill="#d2d2d2" textLength="103" lengthAdjust="spacingAndGlyphs" >Table style</text><rect x="2482" y="1542" width="162" height="34" fill="#5a5a5a" rx="4" stroke="#404040" stroke-width="2" /><text x="2494.6" y="1566" font-family="Liberation Sans" font-size="22.5" fill="#f0f0f0" textLength="92.2" lengthAdjust="spacingAndGlyphs" >Standard</text><path d="M2624,1552.5 L2636.5,1552.5 L2630.25,1561.5 Z" fill="#d0d0d0"/></g><defs><clipPath id="hc"><rect x="5.5" y="5.5" width="21" height="21"/></clipPath><clipPath id="hc2"><rect x="0" y="0" width="32" height="32"/></clipPath><linearGradient id="grd" x1="0" y1="0" x2="0" y2="1"><stop offset="0" stop-color="#7fcaf8"/><stop offset="0.45" stop-color="#9fc3da"/><stop offset="1" stop-color="#555"/></linearGradient><clipPath id="lclip"><rect x="112" y="214" width="180" height="1356"/></clipPath></defs><path d="M120.3,229.8 L137.7,229.8 L129,239.0 Z" fill="#d6d6d6"/><text x="146.3" y="240" font-family="Liberation Sans" font-size="20.5" fill="#d9d9d9" textLength="45.6" lengthAdjust="spacingAndGlyphs" >Draw</text><path d="M281.26,233.19 L281.26,235.01 L278.41,236.04 L277.91,237.26 L279.19,240.00 L277.90,241.29 L275.16,240.01 L273.94,240.51 L272.91,243.36 L271.09,243.36 L270.06,240.51 L268.84,240.01 L266.10,241.29 L264.81,240.00 L266.09,237.26 L265.59,236.04 L262.74,235.01 L262.74,233.19 L265.59,232.16 L266.09,230.94 L264.81,228.20 L266.10,226.91 L268.84,228.19 L270.06,227.69 L271.09,224.84 L272.91,224.84 L273.94,227.69 L275.16,228.19 L277.90,226.91 L279.19,228.20 L277.91,230.94 L278.41,232.16 Z" fill="#d8d8d8"/><circle cx="272" cy="234.1" r="3.07" fill="#535353"/><g transform="translate(126.0,266.0) scale(1.0)"><path d="M2.5,29.5 L29.5,2.5" stroke="#dcdcdc" stroke-width="1.7"/><rect x="0.19999999999999996" y="28.2" width="3.6" height="3.6" fill="#86c9f6"/><rect x="28.2" y="0.19999999999999996" width="3.6" height="3.6" fill="#86c9f6"/></g><g transform="translate(186.0,266.0) scale(1.0)"><path d="M2,23.2 L21.5,23.2 A7.6,7.6 0 0 0 21.5,8" fill="none" stroke="#dcdcdc" stroke-width="1.8"/><rect x="-0.30000000000000004" y="21.4" width="3.6" height="3.6" fill="#86c9f6"/><rect x="19.7" y="21.4" width="3.6" height="3.6" fill="#86c9f6"/><rect x="19.7" y="6.2" width="3.6" height="3.6" fill="#86c9f6"/></g><g transform="translate(246.0,266.0) scale(1.0)"><circle cx="16" cy="16" r="14.8" fill="none" stroke="#dcdcdc" stroke-width="2"/><rect x="14.1" y="14.1" width="3.8" height="3.8" fill="#86c9f6"/><path d="M17.5,14.5 L22.5,9.5" stroke="#86c9f6" stroke-width="2.2"/><path d="M26,6 L18.5,8.5 L23.5,13.5 Z" fill="#86c9f6"/><path d="M37.5,30 L37.5,37.5 L30,37.5 Z" fill="#8c8c8c"/></g><g transform="translate(126.0,330.0) scale(1.0)"><rect x="2.8" y="6.5" width="26.5" height="18" fill="none" stroke="#dcdcdc" stroke-width="2"/><rect x="0.5" y="4.5" width="4" height="4" fill="#86c9f6"/><rect x="27.0" y="22.5" width="4" height="4" fill="#86c9f6"/><path d="M37.5,30 L37.5,37.5 L30,37.5 Z" fill="#8c8c8c"/></g><g transform="translate(186.0,330.0) scale(1.0)"><path d="M4,28 Q6,5 28,3" fill="none" stroke="#dcdcdc" stroke-width="2" stroke-dasharray="6,3"/><rect x="2.0" y="26.0" width="4" height="4" fill="#86c9f6"/><rect x="9.0" y="9.0" width="4" height="4" fill="#86c9f6"/><rect x="25.8" y="0.8999999999999999" width="4" height="4" fill="#86c9f6"/><path d="M37.5,30 L37.5,37.5 L30,37.5 Z" fill="#8c8c8c"/></g><g transform="translate(246.0,330.0) scale(1.0)"><path d="M2,29.7 Q3,12 8.1,9.9 Q12,9 23.8,22 Q28,20 29.8,2" fill="none" stroke="#dcdcdc" stroke-width="2" stroke-dasharray="6,3"/><rect x="0.0" y="27.7" width="4" height="4" fill="#86c9f6"/><rect x="6.1" y="7.9" width="4" height="4" fill="#86c9f6"/><rect x="21.8" y="20.0" width="4" height="4" fill="#86c9f6"/><rect x="27.8" y="-0.10000000000000009" width="4" height="4" fill="#86c9f6"/><path d="M37.5,30 L37.5,37.5 L30,37.5 Z" fill="#8c8c8c"/></g><g transform="translate(126.0,394.0) scale(1.0)"><path d="M6,8 L26,8 M6,23.5 L26,23.5" stroke="#dcdcdc" stroke-width="2"/><path d="M0,16 L12,16 M14.5,16 L17.5,16 M20,16 L32,16" stroke="#86c9f6" stroke-width="2.2"/><path d="M37.5,30 L37.5,37.5 L30,37.5 Z" fill="#8c8c8c"/></g><g transform="translate(186.0,394.0) scale(1.0)"><path d="M6,26 L26,6" stroke="#dcdcdc" stroke-width="2.2"/><path d="M1,31 L3.5,21 L11,28.5 Z M31,1 L28.5,11 L21,3.5 Z" fill="#dcdcdc"/><rect x="14.0" y="14.0" width="4" height="4" fill="#86c9f6"/><path d="M37.5,30 L37.5,37.5 L30,37.5 Z" fill="#8c8c8c"/></g><g transform="translate(246.0,394.0) scale(1.0)"><path d="M16,5.5 A13.6,10 0 1 0 29.6,15.5" fill="none" stroke="#dcdcdc" stroke-width="2"/><path d="M19,5.8 A13.6,10 0 0 1 27.5,10" fill="none" stroke="#dcdcdc" stroke-width="2" stroke-dasharray="4,3"/><rect x="14.0" y="13.5" width="4" height="4" fill="#86c9f6"/><rect x="14.0" y="3.5" width="4" height="4" fill="#86c9f6"/><rect x="27.6" y="13.5" width="4" height="4" fill="#86c9f6"/><path d="M37.5,30 L37.5,37.5 L30,37.5 Z" fill="#8c8c8c"/></g><g transform="translate(126.0,458.0) scale(1.0)"><path d="M2,10 Q2,6 6,6 Q9,3.5 12,6 Q15,3.5 18,6 Q21,3.5 24,6 Q27,3.5 29,7 Q32,10 30,13 Q32,16 30,19 Q32,23 29,25 Q27,28.5 24,26 Q21,28.5 18,26 Q15,28.5 12,26 Q9,28.5 6,26 Q2,26 2,22 Q0,19 2,16 Q0,13 2,10 Z" fill="none" stroke="#dcdcdc" stroke-width="2"/><path d="M37.5,30 L37.5,37.5 L30,37.5 Z" fill="#8c8c8c"/></g><g transform="translate(186.0,458.0) scale(1.0)"><path d="M3,1 L13.5,11.5 M30,1 L18.5,12.5 M13.5,17.5 L2,29" stroke="#dcdcdc" stroke-width="2"/><rect x="14.0" y="13.0" width="4" height="4" fill="#86c9f6"/><path d="M37.5,30 L37.5,37.5 L30,37.5 Z" fill="#8c8c8c"/></g><g transform="translate(246.0,458.0) scale(1.0)"><path d="M0,15.5 L12,15.5 L13.5,2.5 L19.2,28 L25.2,15.5 L31.6,15.5" fill="none" stroke="#dcdcdc" stroke-width="1.8"/></g><rect x="120" y="516.5" width="164" height="2.2" fill="#464646" /><path d="M120.3,537.1999999999999 L137.7,537.1999999999999 L129,546.4 Z" fill="#d6d6d6"/><text x="146.3" y="548.1" font-family="Liberation Sans" font-size="20.5" fill="#d9d9d9" textLength="52.1" lengthAdjust="spacingAndGlyphs" >Hatch</text><path d="M281.26,540.59 L281.26,542.41 L278.41,543.44 L277.91,544.66 L279.19,547.40 L277.90,548.69 L275.16,547.41 L273.94,547.91 L272.91,550.76 L271.09,550.76 L270.06,547.91 L268.84,547.41 L266.10,548.69 L264.81,547.40 L266.09,544.66 L265.59,543.44 L262.74,542.41 L262.74,540.59 L265.59,539.56 L266.09,538.34 L264.81,535.60 L266.10,534.31 L268.84,535.59 L270.06,535.09 L271.09,532.24 L272.91,532.24 L273.94,535.09 L275.16,535.59 L277.90,534.31 L279.19,535.60 L277.91,538.34 L278.41,539.56 Z" fill="#d8d8d8"/><circle cx="272" cy="541.5" r="3.07" fill="#535353"/><g transform="translate(126.0,574.0) scale(1.0)"><path d="M0,4.5 L32,4.5 M0,27.5 L32,27.5 M4.5,0 L4.5,32 M27.5,0 L27.5,32" stroke="#dcdcdc" stroke-width="1.7"/><g clip-path="url(#hc)"><path d="M-17,27 L5,5 M-10.8,27 L11.2,5 M-4.6000000000000005,27 L17.4,5 M1.5999999999999996,27 L23.6,5 M7.8,27 L29.8,5 M14.0,27 L36.0,5 M20.2,27 L42.2,5 M26.4,27 L48.4,5" stroke="#86c9f6" stroke-width="2.2"/></g></g><g transform="translate(186.0,574.0) scale(1.0)"><path d="M0,4.5 L32,4.5 M0,27.5 L32,27.5 M4.5,0 L4.5,32 M27.5,0 L27.5,32" stroke="#dcdcdc" stroke-width="1.7"/><g clip-path="url(#hc)"><path d="M-17,27 L5,5 M-9.5,27 L12.5,5 M-2.0,27 L20.0,5 M5.5,27 L27.5,5 M13.0,27 L35.0,5 M20.5,27 L42.5,5" stroke="#86c9f6" stroke-width="2.4" stroke-dasharray="8,3"/></g><path d="M11,4 L12.5,1 L19,1 L20.5,4 Z" fill="#f0f0f0"/><path d="M37.5,30 L37.5,37.5 L30,37.5 Z" fill="#8c8c8c"/></g><g transform="translate(246.0,574.0) scale(1.0)"><path d="M0,4.5 L32,4.5 M0,27.5 L32,27.5 M4.5,0 L4.5,32 M27.5,0 L27.5,32" stroke="#dcdcdc" stroke-width="1.7"/><rect x="6" y="6" width="20" height="20" fill="url(#grd)"/></g><g transform="translate(126.0,638.0) scale(1.0)"><path d="M0,4.5 L32,4.5 M0,27.5 L32,27.5 M4.5,0 L4.5,32 M27.5,0 L27.5,32" stroke="#86c9f6" stroke-width="1.7"/></g><g transform="translate(186.0,638.0) scale(1.0)"><g clip-path="url(#hc2)"><path d="M-32,32 L0,0 M-27.4,32 L4.600000000000001,0 M-22.799999999999997,32 L9.200000000000003,0 M-18.199999999999996,32 L13.800000000000004,0 M-13.599999999999996,32 L18.400000000000006,0 M-8.999999999999996,32 L23.000000000000004,0 M-4.399999999999997,32 L27.6,0 M0.20000000000000284,32 L32.2,0 M4.8000000000000025,32 L36.800000000000004,0 M9.400000000000002,32 L41.400000000000006,0 M14.000000000000002,32 L46.0,0 M18.6,32 L50.6,0 M23.200000000000003,32 L55.2,0 M27.800000000000004,32 L59.800000000000004,0" stroke="#d0d0d0" stroke-width="1.7"/></g><path d="M5,7 L17,7 L17,16 L27,16 L27,25 L5,25 Z" fill="#86c9f6"/></g><g transform="translate(246.0,638.0) scale(1.0)"><path d="M0,3 L19.5,3 L32,13 L32,29 L0,29 Z" fill="#dcdcdc"/><circle cx="15" cy="16" r="4.7" fill="#4a4a4a"/></g><rect x="120" y="696" width="164" height="2.2" fill="#464646" /><path d="M120.3,717.6999999999999 L137.7,717.6999999999999 L129,726.9 Z" fill="#d6d6d6"/><text x="146.3" y="728.1" font-family="Liberation Sans" font-size="20.5" fill="#d9d9d9" textLength="50.4" lengthAdjust="spacingAndGlyphs" >Block</text><path d="M281.26,721.09 L281.26,722.91 L278.41,723.94 L277.91,725.16 L279.19,727.90 L277.90,729.19 L275.16,727.91 L273.94,728.41 L272.91,731.26 L271.09,731.26 L270.06,728.41 L268.84,727.91 L266.10,729.19 L264.81,727.90 L266.09,725.16 L265.59,723.94 L262.74,722.91 L262.74,721.09 L265.59,720.06 L266.09,718.84 L264.81,716.10 L266.10,714.81 L268.84,716.09 L270.06,715.59 L271.09,712.74 L272.91,712.74 L273.94,715.59 L275.16,716.09 L277.90,714.81 L279.19,716.10 L277.91,718.84 L278.41,720.06 Z" fill="#d8d8d8"/><circle cx="272" cy="722.0" r="3.07" fill="#535353"/><g transform="translate(126.0,754.0) scale(1.0)"><g transform="translate(1,11)"><rect x="1" y="1" width="18" height="15" fill="#9a9a9a" stroke="#dcdcdc" stroke-width="1.6"/><circle cx="18" cy="15" r="6" fill="#9a9a9a" stroke="#dcdcdc" stroke-width="1.6"/><path d="M18,9 L18,15 L12,15" fill="none" stroke="#dcdcdc" stroke-width="1.2"/><rect x="-1" y="13.5" width="4" height="4" fill="#dcdcdc"/></g><path d="M31.50,8.00 L27.06,9.09 L30.36,12.25 L25.97,10.97 L27.25,15.36 L24.09,12.06 L23.00,16.50 L21.91,12.06 L18.75,15.36 L20.03,10.97 L15.64,12.25 L18.94,9.09 L14.50,8.00 L18.94,6.91 L15.64,3.75 L20.03,5.03 L18.75,0.64 L21.91,3.94 L23.00,-0.50 L24.09,3.94 L27.25,0.64 L25.97,5.03 L30.36,3.75 L27.06,6.91 Z" fill="#f6c860"/></g><g transform="translate(186.0,754.0) scale(1.0)"><path d="M12,0 L24,0 L30,6 L30,22 L12,22 Z" fill="#86c9f6"/><path d="M24,0 L24,6 L30,6" fill="#c8e6fb"/><g transform="translate(1,9)"><rect x="1" y="1" width="18" height="16" fill="#9a9a9a" stroke="#dcdcdc" stroke-width="1.6"/><circle cx="18" cy="16" r="6.5" fill="#9a9a9a" stroke="#dcdcdc" stroke-width="1.6"/><path d="M18,9.5 L18,16 L11.5,16" fill="none" stroke="#dcdcdc" stroke-width="1.2"/><rect x="-1" y="14.5" width="4" height="4" fill="#dcdcdc"/></g></g><g transform="translate(246.0,754.0) scale(1.0)"><g transform="translate(1,9)"><rect x="1" y="1" width="18" height="16" fill="#9a9a9a" stroke="#dcdcdc" stroke-width="1.6"/><circle cx="18" cy="16" r="6.5" fill="#9a9a9a" stroke="#dcdcdc" stroke-width="1.6"/><path d="M18,9.5 L18,16 L11.5,16" fill="none" stroke="#dcdcdc" stroke-width="1.2"/><rect x="-1" y="14.5" width="4" height="4" fill="#dcdcdc"/></g><g transform="translate(15,14) rotate(-45) scale(1.0)"><path d="M0,0 L4,-4 L4,4 Z" fill="#c8c8c8"/><rect x="4" y="-4" width="11" height="8" fill="#f6c860"/><path d="M15,-4 L17,-4 A4,4 0 0 1 17,4 L15,4 Z" fill="#ea5a5a"/></g></g><g transform="translate(126.0,818.0) scale(1.0)"><g transform="translate(0,6)"><path d="M0,1 L13,1 L30,18 L16,32 L0,16 Z" fill="#dcdcdc"/><circle cx="6" cy="7" r="2.2" fill="#535353"/><path d="M11,14 L22,25 M9,19 L17,27 M14,11 L24,21" stroke="#8a8a8a" stroke-width="1.3"/></g><g transform="translate(14,20) rotate(-45) scale(0.95)"><path d="M0,0 L4,-4 L4,4 Z" fill="#c8c8c8"/><rect x="4" y="-4" width="11" height="8" fill="#f6c860"/><path d="M15,-4 L17,-4 A4,4 0 0 1 17,4 L15,4 Z" fill="#ea5a5a"/></g><path d="M37.5,30 L37.5,37.5 L30,37.5 Z" fill="#8c8c8c"/></g><g transform="translate(186.0,818.0) scale(1.0)"><g transform="translate(2,5)"><path d="M0,1 L13,1 L30,18 L16,32 L0,16 Z" fill="#dcdcdc"/><circle cx="6" cy="7" r="2.2" fill="#535353"/><path d="M11,14 L22,25 M9,19 L17,27 M14,11 L24,21" stroke="#8a8a8a" stroke-width="1.3"/></g></g><g transform="translate(246.0,818.0) scale(1.0)"><g transform="translate(1,13)"><rect x="1" y="1" width="15" height="15" fill="#9a9a9a" stroke="#dcdcdc" stroke-width="1.6"/><circle cx="15" cy="15" r="6" fill="#9a9a9a" stroke="#dcdcdc" stroke-width="1.6"/><path d="M15,9 L15,15 L9,15" fill="none" stroke="#dcdcdc" stroke-width="1.2"/><rect x="-1" y="13.5" width="4" height="4" fill="#dcdcdc"/></g><rect x="17" y="0" width="16" height="14" fill="#f0f0f0"/><rect x="17" y="0" width="16" height="3" fill="#a8a8a8"/><path d="M19.5,6 L21,6 M23,6 L30,6 M19.5,10 L21,10 M23,10 L30,10" stroke="#555" stroke-width="1.6"/></g><g transform="translate(126.0,882.0) scale(1.0)"><g transform="translate(1,13)"><rect x="1" y="1" width="15" height="15" fill="#9a9a9a" stroke="#dcdcdc" stroke-width="1.6"/><circle cx="15" cy="15" r="6" fill="#9a9a9a" stroke="#dcdcdc" stroke-width="1.6"/><path d="M15,9 L15,15 L9,15" fill="none" stroke="#dcdcdc" stroke-width="1.2"/><rect x="-1" y="13.5" width="4" height="4" fill="#dcdcdc"/></g><path d="M17,0 L32,0 L32,16 L17,16 Z" fill="#b8b8b8"/><rect x="20" y="1" width="9" height="5" fill="#f0f0f0"/><rect x="20" y="10" width="9" height="6" fill="#f0f0f0"/></g><g transform="translate(186.0,882.0) scale(1.0)"><rect x="1" y="1" width="30" height="30" fill="#dcdcdc"/><rect x="1" y="1" width="30" height="5.5" fill="#9c9c9c"/><rect x="3" y="3.3" width="3" height="1.2" fill="#555"/><rect x="5" y="8" width="6" height="6" fill="#1f8de6"/><rect x="5" y="16" width="6" height="6" fill="#1f8de6"/><rect x="13" y="8" width="6" height="6" fill="#5a5a5a"/><rect x="13" y="16" width="6" height="6" fill="#5a5a5a"/><rect x="21" y="8" width="6" height="6" fill="#5a5a5a"/><rect x="21" y="16" width="6" height="6" fill="#5a5a5a"/><rect x="5" y="24.5" width="22" height="1.8" fill="#555"/></g><g transform="translate(246.0,882.0) scale(1.0)"><rect x="1" y="1" width="27" height="27" fill="#9a9a9a" stroke="#dcdcdc" stroke-width="1.3"/><path d="M29.3,24 L29.3,32.5 M25,28.3 L33.5,28.3" stroke="#62b4ee" stroke-width="2.6"/></g><g transform="translate(126.0,946.0) scale(1.0)"><g transform="translate(0,4)"><path d="M0,1 L13,1 L30,18 L16,32 L0,16 Z" fill="#dcdcdc"/><circle cx="6" cy="7" r="2.2" fill="#535353"/><path d="M11,14 L22,25 M9,19 L17,27 M14,11 L24,21" stroke="#8a8a8a" stroke-width="1.3"/></g><path d="M15,9 A7,7 0 0 1 28,7 M29,12 A7,7 0 0 1 16,15" fill="none" stroke="#6fcf97" stroke-width="2.6"/><path d="M26,3 L31,7 L25,9 Z M18,18 L13,14 L19,12 Z" fill="#6fcf97"/></g><g transform="translate(186.0,946.0) scale(1.0)"><g transform="translate(0,4)"><path d="M0,1 L13,1 L30,18 L16,32 L0,16 Z" fill="#dcdcdc"/><circle cx="6" cy="7" r="2.2" fill="#535353"/><path d="M11,14 L22,25 M9,19 L17,27 M14,11 L24,21" stroke="#8a8a8a" stroke-width="1.3"/></g><rect x="17" y="1" width="12" height="11" fill="#86c9f6" stroke="#62b4ee" stroke-width="1"/><path d="M15,0 L15,3 M31,0 L31,3 M15,11 L15,14 M31,11 L31,14" stroke="#62b4ee" stroke-width="1.4"/></g><g transform="translate(246.0,946.0) scale(1.0)"><rect x="1" y="1" width="14" height="10" fill="#9a9a9a" stroke="#dcdcdc" stroke-width="1.3"/><circle cx="14.5" cy="10.5" r="4.8" fill="#9a9a9a" stroke="#dcdcdc" stroke-width="1.3"/><rect x="0" y="9.5" width="2.5" height="2.5" fill="#dcdcdc"/><path d="M31,13 L31,7 L24,7" fill="none" stroke="#f0f0f0" stroke-width="1.5"/><path d="M19,7 L25,3.5 L25,10.5 Z" fill="#f0f0f0"/><rect x="13.5" y="15" width="16" height="11" fill="#6a90b0" stroke="#86c9f6" stroke-width="1.3"/><circle cx="29" cy="26" r="5.2" fill="#6a90b0" stroke="#86c9f6" stroke-width="1.3"/><rect x="12" y="24.5" width="3" height="3" fill="#86c9f6"/></g><rect x="120" y="1004.5" width="164" height="2.2" fill="#464646" /><path d="M120.3,1025.7 L137.7,1025.7 L129,1034.8999999999999 Z" fill="#d6d6d6"/><text x="146.3" y="1035.9" font-family="Liberation Sans" font-size="20.5" fill="#d9d9d9" textLength="60.5" lengthAdjust="spacingAndGlyphs" >Modify</text><path d="M281.26,1029.09 L281.26,1030.91 L278.41,1031.94 L277.91,1033.16 L279.19,1035.90 L277.90,1037.19 L275.16,1035.91 L273.94,1036.41 L272.91,1039.26 L271.09,1039.26 L270.06,1036.41 L268.84,1035.91 L266.10,1037.19 L264.81,1035.90 L266.09,1033.16 L265.59,1031.94 L262.74,1030.91 L262.74,1029.09 L265.59,1028.06 L266.09,1026.84 L264.81,1024.10 L266.10,1022.81 L268.84,1024.09 L270.06,1023.59 L271.09,1020.74 L272.91,1020.74 L273.94,1023.59 L275.16,1024.09 L277.90,1022.81 L279.19,1024.10 L277.91,1026.84 L278.41,1028.06 Z" fill="#d8d8d8"/><circle cx="272" cy="1030.0" r="3.07" fill="#535353"/><g transform="translate(126.0,1062.0) scale(1.0)"><path d="M16,4 L16,28 M4,16 L28,16" stroke="#f0f0f0" stroke-width="2.2"/><path d="M16,0 L21,7.5 L11,7.5 Z M16,32 L21,24.5 L11,24.5 Z M0,16 L7.5,11 L7.5,21 Z M32,16 L24.5,11 L24.5,21 Z" fill="#f0f0f0"/></g><g transform="translate(186.0,1062.0) scale(1.0)"><circle cx="7.5" cy="7.5" r="7" fill="none" stroke="#dcdcdc" stroke-width="1.6"/><path d="M15,3 L25.5,3 L25.5,11" fill="none" stroke="#f0f0f0" stroke-width="1.6"/><path d="M21.5,9 L29.5,9 L25.5,15 Z" fill="#f0f0f0"/><circle cx="14.5" cy="25" r="7" fill="none" stroke="#86c9f6" stroke-width="1.8"/><circle cx="24" cy="25" r="7" fill="none" stroke="#86c9f6" stroke-width="1.8"/></g><g transform="translate(246.0,1062.0) scale(1.0)"><path d="M15,3 L15,30 L1,30 Z" fill="none" stroke="#dcdcdc" stroke-width="1.6"/><path d="M17,3 L17,30 L31,30 Z" fill="none" stroke="#86c9f6" stroke-width="1.6"/></g><g transform="translate(126.0,1126.0) scale(1.0)"><path d="M28.5,16 A13,13 0 1 1 16,3" fill="none" stroke="#f0f0f0" stroke-width="1.8"/><path d="M22,3 L14,-1 L14,7 Z" fill="#f0f0f0"/></g><g transform="translate(186.0,1126.0) scale(1.0)"><rect x="2" y="2" width="20" height="21" fill="none" stroke="#f0f0f0" stroke-width="1.4"/><rect x="0.5" y="0.5" width="3" height="3" fill="#f0f0f0"/><rect x="10.5" y="0.5" width="3" height="3" fill="#f0f0f0"/><rect x="20.5" y="0.5" width="3" height="3" fill="#f0f0f0"/><rect x="0.5" y="11.0" width="3" height="3" fill="#f0f0f0"/><rect x="20.5" y="11.0" width="3" height="3" fill="#f0f0f0"/><rect x="0.5" y="21.5" width="3" height="3" fill="#f0f0f0"/><rect x="10.5" y="21.5" width="3" height="3" fill="#f0f0f0"/><rect x="10.5" y="11.0" width="3" height="3" fill="#f0f0f0"/><path d="M22,16 L22,32 L26,28 L32,28 Z" fill="#f0f0f0"/><path d="M28.5,9 L28.5,15.5 M25.3,12.3 L31.7,12.3" stroke="#f0f0f0" stroke-width="1.2"/></g><g transform="translate(246.0,1126.0) scale(1.0)"><path d="M1,3 L16,3" stroke="#86c9f6" stroke-width="1.8" stroke-dasharray="4,2"/><path d="M24,3 L32,3" stroke="#dcdcdc" stroke-width="1.8"/><path d="M20,0 L22,2 L20,20 Z M12,8 L22,20 L20,22 Z" fill="#f0f0f0"/><ellipse cx="19" cy="27" rx="3.5" ry="4.5" fill="none" stroke="#f0f0f0" stroke-width="1.6"/><ellipse cx="27" cy="25" rx="4" ry="3.5" fill="none" stroke="#f0f0f0" stroke-width="1.6" transform="rotate(40 27 25)"/><path d="M37.5,30 L37.5,37.5 L30,37.5 Z" fill="#8c8c8c"/></g><g transform="translate(126.0,1190.0) scale(1.0)"><path d="M1.5,17 A15,15 0 0 1 16.5,2" fill="none" stroke="#86c9f6" stroke-width="2"/><path d="M1.5,20 L1.5,32 M20,2 L32,2" stroke="#dcdcdc" stroke-width="2"/><path d="M37.5,30 L37.5,37.5 L30,37.5 Z" fill="#8c8c8c"/></g><g transform="translate(186.0,1190.0) scale(1.0)"><path d="M32,1 L10,1 A13.5,12.8 0 0 0 10,26.5 L32,26.5" fill="none" stroke="#86c9f6" stroke-width="1.6"/><path d="M32,7 L12,7 A7,6.8 0 0 0 12,20.5 L32,20.5" fill="none" stroke="#dcdcdc" stroke-width="1.6"/></g><g transform="translate(246.0,1190.0) scale(1.0)"><rect x="2.5" y="2" width="12" height="12" fill="#dcdcdc"/><rect x="18.5" y="2" width="12" height="12" fill="#86c9f6"/><rect x="2.5" y="18" width="12" height="12" fill="#86c9f6"/><rect x="18.5" y="18" width="12" height="12" fill="#86c9f6"/><path d="M37.5,30 L37.5,37.5 L30,37.5 Z" fill="#8c8c8c"/></g><g transform="translate(126.0,1254.0) scale(1.0)"><path d="M4,8 L10,1 L28,1 L22,8 Z M28.5,4 L28.5,23 L22.5,30 M0.5,11 L0.5,30" fill="none" stroke="#86c9f6" stroke-width="1.8"/><rect x="3.5" y="11" width="18" height="19" fill="none" stroke="#dcdcdc" stroke-width="1.6"/></g><g transform="translate(186.0,1254.0) scale(1.0)"><rect x="1.5" y="1" width="14.5" height="31" fill="none" stroke="#dcdcdc" stroke-width="1.4"/><path d="M16.5,1 L22,1 L32,32 L16.5,32" fill="none" stroke="#86c9f6" stroke-width="1.4"/><path d="M9,24 L17,24" stroke="#f0f0f0" stroke-width="2.4"/><path d="M23,24 L16,19.5 L16,28.5 Z" fill="#f0f0f0"/></g><g transform="translate(246.0,1254.0) scale(1.0)"><path d="M0,4 L4,0 L18,0 L18,14 L14,18 L0,18 Z" fill="#e4e4e4"/><path d="M14,4 L18,0 L18,14 L14,18 Z" fill="#bdbdbd"/><path d="M0,4 L4,0 L18,0 L14,4 Z" fill="#f2f2f2"/><rect x="17" y="17" width="15" height="15" fill="#86c9f6"/><path d="M2,21 L2,27 L9,27" fill="none" stroke="#f0f0f0" stroke-width="1.4"/><path d="M12,27 L8,24 L8,30 Z" fill="#f0f0f0"/></g><g transform="translate(126.0,1318.0) scale(1.0)"><path d="M1,15 L1,1 L31,1 L31,31 L19,31" fill="none" stroke="#86c9f6" stroke-width="1.6"/><rect x="1" y="15" width="17.5" height="17" fill="none" stroke="#dcdcdc" stroke-width="1.6"/></g><g transform="translate(186.0,1318.0) scale(1.0)"><path d="M1,32 L11,22 M21,12 L32,1" stroke="#dcdcdc" stroke-width="2.2"/><path d="M8,18 L15,27 M14,12 L21,21" stroke="#86c9f6" stroke-width="3"/><path d="M37.5,30 L37.5,37.5 L30,37.5 Z" fill="#8c8c8c"/></g><g transform="translate(246.0,1318.0) scale(1.0)"><path d="M0,16 L32,16" stroke="#dcdcdc" stroke-width="1.6"/><path d="M10,10 L16,16 L10,22 Z M22,10 L16,16 L22,22 Z" fill="#86c9f6"/></g><g transform="translate(126.0,1382.0) scale(1.0)"><rect x="1" y="1" width="16" height="12" fill="#bdbdbd"/><rect x="9.5" y="10" width="21" height="17" fill="#f0f0f0"/><rect x="11" y="11.5" width="18" height="14" fill="#d8d8d8" stroke="#8a8a8a" stroke-width="0.8"/><path d="M12,25 L12,13 L20,25 Z" fill="none" stroke="#444" stroke-width="1.2"/><path d="M19.5,15.5 L29,15.5 M19.5,20 L29,20 M22.5,11.5 L22.5,25.5 M26,11.5 L26,25.5" stroke="#8a8a8a" stroke-width="1"/><path d="M20,3 L25,3 L25,8" fill="none" stroke="#f0f0f0" stroke-width="1.3"/><path d="M22,7 L28,7 L25,10.5 Z" fill="#f0f0f0"/><path d="M4,20 L4,26 L9,26" fill="none" stroke="#f0f0f0" stroke-width="1.3"/><path d="M1,20.5 L7,20.5 L4,17 Z" fill="#f0f0f0"/></g><g transform="translate(186.0,1382.0) scale(1.0)"><rect x="2" y="0.5" width="17.5" height="12" fill="#9a9a9a" stroke="#dcdcdc" stroke-width="1.3"/><circle cx="19.5" cy="12.5" r="6.5" fill="#9a9a9a" stroke="#dcdcdc" stroke-width="1.3"/><rect x="0" y="11" width="3.5" height="3.5" fill="#dcdcdc"/><path d="M5,19 L5,26 L13,26" fill="none" stroke="#f0f0f0" stroke-width="1.4"/><path d="M16.5,26 L12,22.5 L12,29.5 Z" fill="#f0f0f0"/><circle cx="26" cy="26" r="6" fill="none" stroke="#62b4ee" stroke-width="1.8"/></g><g transform="translate(246.0,1382.0) scale(1.0)"><path d="M16,0 L16,17" stroke="#d6a06a" stroke-width="1.8"/><path d="M13,17 L19,17 L20.5,21.5 L11.5,21.5 Z" fill="#d6a06a"/><path d="M11.5,21.5 L20.5,21.5 L26,32 L6,32 Z" fill="#f6cd73"/></g><rect x="120" y="1440" width="164" height="2.2" fill="#464646" /><path d="M120.3,1461.7 L137.7,1461.7 L129,1470.8999999999999 Z" fill="#d6d6d6"/><text x="146.3" y="1471.6" font-family="Liberation Sans" font-size="20.5" fill="#d9d9d9" textLength="36.1" lengthAdjust="spacingAndGlyphs" >Text</text><path d="M281.26,1465.09 L281.26,1466.91 L278.41,1467.94 L277.91,1469.16 L279.19,1471.90 L277.90,1473.19 L275.16,1471.91 L273.94,1472.41 L272.91,1475.26 L271.09,1475.26 L270.06,1472.41 L268.84,1471.91 L266.10,1473.19 L264.81,1471.90 L266.09,1469.16 L265.59,1467.94 L262.74,1466.91 L262.74,1465.09 L265.59,1464.06 L266.09,1462.84 L264.81,1460.10 L266.10,1458.81 L268.84,1460.09 L270.06,1459.59 L271.09,1456.74 L272.91,1456.74 L273.94,1459.59 L275.16,1460.09 L277.90,1458.81 L279.19,1460.10 L277.91,1462.84 L278.41,1464.06 Z" fill="#d8d8d8"/><circle cx="272" cy="1466.0" r="3.07" fill="#535353"/><g transform="translate(126.0,1498.0) scale(1.0)"><text x="16" y="29" text-anchor="middle" font-family="Liberation Sans" font-size="39" font-weight="bold" fill="#d8d8d8" textLength="27" lengthAdjust="spacingAndGlyphs">A</text></g><g transform="translate(186.0,1498.0) scale(1.0)"><text x="14.5" y="27" text-anchor="middle" font-family="Liberation Sans" font-size="39" font-weight="bold" fill="#d8d8d8" textLength="25" lengthAdjust="spacingAndGlyphs">A</text><path d="M23,21 L31,13" stroke="#f0f0f0" stroke-width="3"/><path d="M16,32 Q17,24 22,23 L24,25 Q22,31 16,32 Z" fill="#d6a06a"/></g><g transform="translate(246.0,1498.0) scale(1.0)"><text x="16" y="28.5" text-anchor="middle" font-family="Liberation Sans" font-size="38" font-weight="bold" fill="#d8d8d8" textLength="26" lengthAdjust="spacingAndGlyphs">A</text><path d="M0,30.5 L32,30.5" stroke="#62b4ee" stroke-width="1.5"/></g><g clip-path="url(#lclip)"><g transform="translate(126.0,1562.0) scale(1.0)"><rect x="0" y="0" width="22" height="9" fill="#dcdcdc"/><rect x="2.5" y="3" width="17" height="3" fill="#555"/><path d="M23,2 L29,2 L29,9" fill="none" stroke="#dcdcdc" stroke-width="1.4"/></g><g transform="translate(186.0,1562.0) scale(1.0)"><text x="15" y="17" text-anchor="middle" font-family="Liberation Sans" font-weight="bold" font-size="19" fill="#d8d8d8" textLength="31" lengthAdjust="spacingAndGlyphs">ABC</text></g><g transform="translate(246.0,1562.0) scale(1.0)"><path d="M3,10 A13,10 0 0 1 27,10" fill="none" stroke="#f0f0f0" stroke-width="2.6"/><path d="M12.5,10 A2.6,2.6 0 0 1 17.5,10 Z" fill="#f0f0f0"/></g></g><rect x="112" y="1570" width="180" height="47" fill="#535353" /><g transform="translate(476,118)"><path d="M0,3.7 L21,3.7 L21,12 L32,12 L32,28 L0,28 Z" fill="#d9d9d9"/><path d="M23,3.7 L32,10.3 L23,10.3 Z" fill="#efefef"/></g><g transform="translate(541.9,118)"><path d="M0,3.7 L11.9,3.7 L15.9,7.5 L25,7.5 L25,10 L7,10 L0,25 Z" fill="#d9d9d9"/><path d="M8.3,12 L32,12 L24.5,28 L1.3,28 Z" fill="#d9d9d9"/></g><g transform="translate(609,118)"><g transform="translate(0,0)"><path d="M0,0.8 L30,0.8 L30,30 L3,30 L0,27 Z" fill="#bdbdbd"/><rect x="6" y="0" width="18" height="12" fill="#3d3d3d"/><rect x="7.2" y="0.8" width="15.6" height="10" fill="#f2f2f2"/><rect x="6" y="20.6" width="18" height="10" fill="#3d3d3d"/><rect x="7.2" y="22" width="15.6" height="8" fill="#f2f2f2"/><rect x="9" y="24" width="2" height="4" fill="#3d3d3d"/></g></g><g transform="translate(674,118)"><g transform="translate(0,-0.8)"><path d="M0,0.8 L30,0.8 L30,30 L3,30 L0,27 Z" fill="#bdbdbd"/><rect x="6" y="0" width="18" height="12" fill="#3d3d3d"/><rect x="7.2" y="0.8" width="15.6" height="10" fill="#f2f2f2"/><rect x="6" y="20.6" width="18" height="10" fill="#3d3d3d"/><rect x="7.2" y="22" width="15.6" height="8" fill="#f2f2f2"/><rect x="9" y="24" width="2" height="4" fill="#3d3d3d"/></g><g transform="translate(15.6,31.3) rotate(-45)"><path d="M0,0 L5,-3.6 L5,3.6 Z" fill="#c8c8c8"/><rect x="5" y="-3.6" width="13" height="7.2" fill="#f6c860" stroke="#3d3d3d" stroke-width="0.6"/><path d="M18,-3.6 L20,-3.6 A3.6,3.6 0 0 1 20,3.6 L18,3.6 Z" fill="#ea5a5a"/></g></g><g transform="translate(1063.8,118)"><rect x="0" y="5.9" width="32.4" height="20" fill="#3d3d3d"/><path d="M0,5.9 L5,5.9 L5,11 L27.5,11 L27.5,5.9 L32.4,5.9 L32.4,15.9 L0,15.9 Z" fill="#ffffff"/><rect x="0" y="15.9" width="32.4" height="10" fill="#c8c8c8"/><rect x="6.2" y="0" width="20.1" height="10" fill="#ffffff"/><rect x="5" y="20.5" width="22.5" height="12" fill="#3d3d3d"/><rect x="6.2" y="21.6" width="20.1" height="10.5" fill="#ffffff"/><rect x="8.3" y="22.5" width="15.9" height="7.2" fill="#86c9f6"/></g><g transform="translate(1129.9,118)"><rect x="0" y="5.9" width="28.1" height="16" fill="#3d3d3d"/><path d="M0,5.9 L5,5.9 L5,11 L23.3,11 L23.3,5.9 L28.1,5.9 L28.1,14 L0,14 Z" fill="#ffffff"/><rect x="0" y="14" width="28.1" height="8" fill="#c8c8c8"/><rect x="6.2" y="0" width="15.9" height="10" fill="#ffffff"/><rect x="5.2" y="19" width="17" height="13" fill="#3d3d3d"/><rect x="6.2" y="20" width="15" height="11" fill="#ffffff"/><rect x="8.2" y="21" width="5" height="5" fill="#c8c8c8"/><path d="M12.5,21.8 L20.5,21.8 L20.5,18.3 L33.5,25.6 L20.5,33 L20.5,29.5 L12.5,29.5 Z" fill="#3d3d3d"/><path d="M14,23.1 L22,23.1 L22,19.9 L31.8,25.6 L22,31.8 L22,28 L14,28 Z" fill="#86c9f6"/></g><g transform="translate(1196.9,118)"><path d="M0,0 L17.8,0 L26.5,8.1 L26.5,28 L0,28 Z" fill="#d6d6d6"/><path d="M18.5,0 L26.5,7.5 L18.5,7.5 Z" fill="#ededed"/><path d="M17.8,0 L17.8,8.1 L26.5,8.1" fill="none" stroke="#3d3d3d" stroke-width="1"/><path d="M4.9,0 L4.9,28 M21.6,10 L21.6,28 M0,3.2 L17,3.2 M0,25.4 L26.5,25.4" stroke="#a6a6a6" stroke-width="1.6"/><rect x="11" y="14.6" width="20.2" height="18.5" fill="#3d3d3d"/><rect x="11.9" y="15.6" width="18.3" height="16.5" fill="#f0f0f0"/><rect x="11.9" y="15.6" width="18.3" height="3.5" fill="#a0a0a0"/><path d="M15,23 L16.5,23 M18.5,23 L27,23 M15,27.5 L16.5,27.5 M18.5,27.5 L27,27.5" stroke="#555" stroke-width="1.8"/></g><g transform="translate(1263,118)"><path d="M0,0 L17.8,0 L26.5,8.1 L26.5,28 L0,28 Z" fill="#d6d6d6"/><path d="M18.5,0 L26.5,7.5 L18.5,7.5 Z" fill="#ededed"/><path d="M17.8,0 L17.8,8.1 L26.5,8.1" fill="none" stroke="#3d3d3d" stroke-width="1"/><path d="M4.9,0 L4.9,28 M21.6,10 L21.6,28 M0,3.2 L17,3.2 M0,25.4 L26.5,25.4" stroke="#a6a6a6" stroke-width="1.6"/><g transform="translate(14.8,31.8) rotate(-45)"><path d="M0,0 L5,-3.6 L5,3.6 Z" fill="#c8c8c8"/><rect x="5" y="-3.6" width="13" height="7.2" fill="#f6c860" stroke="#3d3d3d" stroke-width="0.6"/><path d="M18,-3.6 L20,-3.6 A3.6,3.6 0 0 1 20,3.6 L18,3.6 Z" fill="#ea5a5a"/></g></g><g transform="translate(1423.8,118)"><path d="M1.8,0 L21.2,0 L21.2,9 L30.2,9 L30.2,32 L1.8,32 Z" fill="#d6d6d6"/><path d="M22.4,0 L30.2,7.8 L22.4,7.8 Z" fill="#ededed"/><path d="M-1,8.3 L5.3,8.3 L5.3,1.5 L23,12 L5.3,22.5 L5.3,15.6 L-1,15.6 Z" fill="#3d3d3d"/><path d="M0,9.7 L6.7,9.7 L6.7,3.6 L20.7,12 L6.7,20.4 L6.7,14.3 L0,14.3 Z" fill="#86c9f6"/></g><g transform="translate(1489.9,118)"><path d="M0,0 L19.1,0 L19.1,9 L28.1,9 L28.1,32 L0,32 Z" fill="#d6d6d6"/><path d="M20.3,0 L28.1,7.8 L20.3,7.8 Z" fill="#ededed"/><path d="M12.6,18.2 L19.6,18.2 L19.6,13.5 L33.8,22 L19.6,30.7 L19.6,25.7 L12.6,25.7 Z" fill="#3d3d3d"/><path d="M14,19.6 L21,19.6 L21,15.6 L31.9,22 L21,28.6 L21,24.3 L14,24.3 Z" fill="#86c9f6"/></g><g transform="translate(1556,118)"><path d="M0,7 L25.7,7 L25.7,13.3 L32,13.3 L32,30.8 L0,30.8 Z" fill="#d6d6d6"/><path d="M26.9,7 L32,12.100000000000001 L26.9,12.100000000000001 Z" fill="#ededed"/><path d="M3,16 L3,4.5 A3.5,3.5 0 0 1 10,4.5 L10,17 A5,5 0 0 1 0,17 L0,8" fill="none" stroke="#3d3d3d" stroke-width="3.6"/><path d="M3,16 L3,4.5 A3.5,3.5 0 0 1 10,4.5 L10,17 A5,5 0 0 1 0,17 L0,8" fill="none" stroke="#62b4ee" stroke-width="1.9"/></g><g transform="translate(1621.9,118)"><g transform="translate(0,2.4) scale(0.937,0.95)"><g><path d="M0,0.8 L30,0.8 L30,30 L3,30 L0,27 Z" fill="#bdbdbd"/><rect x="6" y="0" width="18" height="12" fill="#3d3d3d"/><rect x="7.2" y="0.8" width="15.6" height="10" fill="#f2f2f2"/><rect x="6" y="20.6" width="18" height="10" fill="#3d3d3d"/><rect x="7.2" y="22" width="15.6" height="8" fill="#f2f2f2"/><rect x="9" y="24" width="2" height="4" fill="#3d3d3d"/></g></g><circle cx="23" cy="9.2" r="9.6" fill="#3d3d3d"/><circle cx="23" cy="9.2" r="7.8" fill="none" stroke="#86c9f6" stroke-width="1.8"/><ellipse cx="23" cy="9.2" rx="3.4" ry="7.8" fill="none" stroke="#86c9f6" stroke-width="1.5"/><path d="M15.2,9.2 L30.8,9.2 M23,1.4 L23,17 M16.5,5.5 L29.5,5.5 M16.5,13 L29.5,13" stroke="#86c9f6" stroke-width="1.4"/></g><g transform="translate(1783.8,118)"><circle cx="12.1" cy="11.9" r="11" fill="none" stroke="#ffffff" stroke-width="1.9"/><path d="M24,23.2 L30,29.4" stroke="#d6a06a" stroke-width="4"/></g><g transform="translate(1849.9,118)"><path d="M11,31.5 Q7,30 2,20 Q0.5,17.5 3,16.8 Q5,16.5 7.5,20 L8.5,21 L5.5,5.5 Q5.2,3.2 7.2,2.8 Q9,2.6 9.5,4.5 L12.2,15 L12.8,1.7 Q13,0 14.8,0 Q16.5,0 16.5,1.8 L17,15 L19.7,3.7 Q20.3,2 22,2.3 Q23.5,2.8 23.2,4.7 L21.2,15.5 L26.5,8.3 Q27.8,6.9 29,7.8 Q30.2,8.8 29.2,10.4 L24.8,18.5 Q24,23 23.5,26 Q22.5,31.8 16,31.8 Z" fill="#d6d6d6"/></g><g transform="translate(1916.9,118)"><ellipse cx="15.1" cy="14.9" rx="14.2" ry="6.5" fill="none" stroke="#ffffff" stroke-width="2"/><path d="M15.1,0.3 L15.1,32" stroke="#86c9f6" stroke-width="2.2" stroke-dasharray="7,3.5"/><path d="M19,9.2 L23.5,5.5 L24,11.5 Z" fill="#ffffff"/></g><g transform="translate(2079.9,118)"><rect x="0" y="0" width="22.1" height="28" fill="#d6d6d6"/><rect x="2.5" y="2.5" width="15.5" height="8.5" fill="#3d3d3d"/><rect x="4.1" y="3.5" width="12.2" height="6.2" fill="#86c9f6"/><path d="M4.5,16 L16,16 M4.5,23.5 L12,23.5 M7,13.5 L7,18.5" stroke="#8a8a8a" stroke-width="1.6"/><g transform="translate(21.5,26) rotate(-45)"><rect x="-8" y="-3.8" width="9" height="7.6" fill="#f6c860" stroke="#3d3d3d" stroke-width="0.8"/><rect x="1" y="-4.5" width="5" height="9" fill="#ededed" stroke="#3d3d3d" stroke-width="0.8"/><rect x="6" y="-1.5" width="4" height="3" fill="#ededed"/></g></g><g transform="translate(2144,118)"><path d="M0,8 L0,31 L5,27 L8.5,32 L11.5,30 L8.5,25 L14,24 Z" fill="#ffffff" stroke="#3d3d3d" stroke-width="0.8"/><path d="M15.5,0.5 L6.5,9 L12,9.5 L9.5,16 L19.5,8 L14,7.5 Z" fill="#f6c860"/><rect x="14" y="14" width="17.6" height="18" fill="#f0f0f0"/><rect x="18.2" y="19.0" width="2.5" height="2" fill="#1f86e0"/><rect x="22" y="19.0" width="7" height="2" fill="#1f86e0"/><rect x="18.2" y="23.1" width="2.5" height="2" fill="#1f86e0"/><rect x="22" y="23.1" width="7" height="2" fill="#1f86e0"/><rect x="18.2" y="27.2" width="2.5" height="2" fill="#1f86e0"/><rect x="22" y="27.2" width="7" height="2" fill="#1f86e0"/></g><g transform="translate(2210.2,118)"><path d="M0,0.5 L17.5,0.5 Q12,5 9.5,9 Q0,14 0,18 Z" fill="#d6d6d6"/><circle cx="20.5" cy="10" r="9" fill="#7fd19e" stroke="#3d3d3d" stroke-width="1"/><circle cx="10" cy="19.5" r="9" fill="#7fd19e" stroke="#3d3d3d" stroke-width="1"/><path d="M20.5,9.5 L20.5,32 M10.5,21 L32,21" stroke="#3d3d3d" stroke-width="4.2"/><path d="M20.5,10 L20.5,32 M10.5,21 L32,21" stroke="#ffffff" stroke-width="2"/><rect x="17" y="17.5" width="7" height="7" fill="none" stroke="#ffffff" stroke-width="1.5"/></g><g transform="translate(2275.7,118)"><circle cx="7" cy="7.2" r="7" fill="#7fd19e"/><circle cx="25" cy="25.2" r="7" fill="#86c9f6"/><path d="M16,5.5 L24.5,5.5 L24.5,11" fill="none" stroke="#ffffff" stroke-width="2"/><path d="M20.5,10 L28.5,10 L24.5,15 Z" fill="#ffffff"/></g><path d="M836.2,133.9 L852,124.8 L852,130.9 L859,130.9 Q868,131.5 868,141.7 Q864,137 859,137 L852,137 L852,143.3 Z" fill="#d9d9d9"/><path d="M933.9,133.9 L918,124.8 L918,130.9 L911,130.9 Q901.9,131.5 901.9,141.7 Q906,137 911,137 L918,137 L918,143.3 Z" fill="#d9d9d9"/><g transform="translate(2236.9,179.9)"><path d="M0,23.8 L17,23.8 L26,13.8 L9,13.8 Z" fill="#3d3d3d"/><path d="M0,22 L17,22 L26,12 L9,12 Z" fill="#dadada"/><path d="M0,17.8 L17,17.8 L26,7.8 L9,7.8 Z" fill="#3d3d3d"/><path d="M0,16 L17,16 L26,6 L9,6 Z" fill="#dadada"/><path d="M0,11.8 L17,11.8 L26,1.8 L9,1.8 Z" fill="#3d3d3d"/><path d="M0,10 L17,10 L26,0 L9,0 Z" fill="#dadada"/><circle cx="25.1" cy="21.1" r="8.2" fill="#3d3d3d"/><circle cx="25.1" cy="21.1" r="7" fill="#dadada"/><rect x="24" y="18.5" width="2.3" height="7" fill="#3d3d3d"/><rect x="24" y="15" width="2.3" height="2.2" fill="#3d3d3d"/></g><g transform="translate(2342.9,175.9)"><path d="M0,6 L22,6 L22,14 L30.3,14 L30.3,28.1 L0,28.1 Z" fill="#dadada"/><path d="M23.3,6 L30.3,12.8 L23.3,12.8 Z" fill="#ededed"/><path d="M3,15 L3,4.5 A3.8,3.8 0 0 1 10.6,4.5 L10.6,15.5 A5,5 0 0 1 0.5,15.5 L0.5,8" fill="none" stroke="#3d3d3d" stroke-width="4"/><path d="M3,15 L3,4.5 A3.8,3.8 0 0 1 10.6,4.5 L10.6,15.5 A5,5 0 0 1 0.5,15.5 L0.5,8" fill="none" stroke="#dadada" stroke-width="2"/></g><g transform="translate(2449,179.2)"><rect x="0" y="0" width="27" height="26" fill="#dadada"/><rect x="0" y="0" width="27" height="5.8" fill="#a8a8a8"/><rect x="2.5" y="2" width="3" height="2" fill="#3d3d3d"/><rect x="4.0" y="8" width="4.8" height="4.8" fill="#444"/><rect x="4.0" y="15" width="4.8" height="4.8" fill="#444"/><rect x="10.8" y="8" width="4.8" height="4.8" fill="#8c8c8c"/><rect x="10.8" y="15" width="4.8" height="4.8" fill="#8c8c8c"/><rect x="17.6" y="8" width="4.8" height="4.8" fill="#8c8c8c"/><rect x="17.6" y="15" width="4.8" height="4.8" fill="#8c8c8c"/><rect x="4" y="22.3" width="19" height="1.6" fill="#8c8c8c"/></g><g transform="translate(2642,187)"><path d="M0,0 L5,5.2 L0,10.4 M7.5,0 L12.5,5.2 L7.5,10.4" fill="none" stroke="#9a9a9a" stroke-width="1.5"/></g><g transform="translate(2628.5,225.5)"><path d="M8,0 L20.5,0 L20.5,27 L8,27 M8,19 L8,25" fill="none" stroke="#dadada" stroke-width="2.4"/><path d="M8,2.5 L8,7.5" stroke="#dadada" stroke-width="2.4"/><path d="M5,13.5 L15,13.5" stroke="#dadada" stroke-width="2.4"/><path d="M0,13.5 L6,8.5 L6,18.5 Z" fill="#dadada"/></g><g transform="translate(2630.5,802.5)"><path d="M8,0 L20.5,0 L20.5,27 L8,27 M8,19 L8,25" fill="none" stroke="#dadada" stroke-width="2.4"/><path d="M8,2.5 L8,7.5" stroke="#dadada" stroke-width="2.4"/><path d="M5,13.5 L15,13.5" stroke="#dadada" stroke-width="2.4"/><path d="M0,13.5 L6,8.5 L6,18.5 Z" fill="#dadada"/></g><g transform="translate(2228,281.7)"><path d="M0,32.199999999999996 L23.5,32.199999999999996 L31.9,20.0 L8.4,20.0 Z" fill="#3d3d3d"/><path d="M0,30.4 L23.5,30.4 L31.9,18.2 L8.4,18.2 Z" fill="#dadada"/><path d="M0,26.0 L23.5,26.0 L31.9,13.8 L8.4,13.8 Z" fill="#3d3d3d"/><path d="M0,24.2 L23.5,24.2 L31.9,12.0 L8.4,12.0 Z" fill="#dadada"/><path d="M0,20.1 L23.5,20.1 L31.9,7.900000000000001 L8.4,7.900000000000001 Z" fill="#3d3d3d"/><path d="M0,18.3 L23.5,18.3 L31.9,6.100000000000001 L8.4,6.100000000000001 Z" fill="#86c9f6"/><circle cx="15.9" cy="6.1" r="6.6" fill="#dadada" stroke="#3d3d3d" stroke-width="1.4"/></g><g transform="translate(2276,280.7)"><path d="M0,23.8 L23.5,23.8 L31.9,11.600000000000001 L8.4,11.600000000000001 Z" fill="#3d3d3d"/><path d="M0,22 L23.5,22 L31.9,9.8 L8.4,9.8 Z" fill="#dadada"/><path d="M0,17.8 L23.5,17.8 L31.9,5.6000000000000005 L8.4,5.6000000000000005 Z" fill="#3d3d3d"/><path d="M0,16 L23.5,16 L31.9,3.8000000000000007 L8.4,3.8000000000000007 Z" fill="#dadada"/><path d="M0,11.8 L23.5,11.8 L31.9,1.8 L8.4,1.8 Z" fill="#3d3d3d"/><path d="M0,10 L23.5,10 L31.9,0 L8.4,0 Z" fill="#dadada"/><g transform="translate(24,23) rotate(-45)"><rect x="-9" y="-4.2" width="9" height="8.4" fill="#f6c860" stroke="#3d3d3d" stroke-width="1"/><rect x="0" y="-5" width="6" height="10" fill="#ededed" stroke="#3d3d3d" stroke-width="1"/><rect x="6" y="-1.7" width="4.5" height="3.4" fill="#ededed" stroke="#3d3d3d" stroke-width="0.8"/></g></g><g transform="translate(2325,282.6)"><path d="M4,30.5 L24,30.5 L31.5,21.5 L11.5,21.5 Z" fill="#3d3d3d"/><path d="M4,28.7 L24,28.7 L31.5,19.7 L11.5,19.7 Z" fill="#dadada"/><path d="M4,24.5 L24,24.5 L31.5,15.5 L11.5,15.5 Z" fill="#3d3d3d"/><path d="M4,22.7 L24,22.7 L31.5,13.7 L11.5,13.7 Z" fill="#dadada"/><path d="M4,18.5 L24,18.5 L31.5,9.5 L11.5,9.5 Z" fill="#3d3d3d"/><path d="M4,16.7 L24,16.7 L31.5,7.699999999999999 L11.5,7.699999999999999 Z" fill="#dadada"/><path d="M0,6 L9,0 L9,3.5 Q17,3 20,11 Q16,8 9,8.5 L9,12 Z" fill="#86c9f6" stroke="#3d3d3d" stroke-width="1"/></g><g transform="translate(2373,282.5)"><path d="M0,23.3 L20,23.3 L28.5,13.8 L8.5,13.8 Z" fill="#3d3d3d"/><path d="M0,21.5 L20,21.5 L28.5,12.0 L8.5,12.0 Z" fill="#86c9f6"/><path d="M0,17.3 L20,17.3 L28.5,7.8 L8.5,7.8 Z" fill="#3d3d3d"/><path d="M0,15.5 L20,15.5 L28.5,6.0 L8.5,6.0 Z" fill="#dadada"/><path d="M0,11.8 L20,11.8 L28.5,2.3 L8.5,2.3 Z" fill="#3d3d3d"/><path d="M0,10 L20,10 L28.5,0.5 L8.5,0.5 Z" fill="#dadada"/><path d="M27.5,18 L19,26.5" stroke="#3d3d3d" stroke-width="4"/><path d="M27.5,18 L19,26.5" stroke="#ffffff" stroke-width="2.2"/><path d="M14.5,30.5 L17,21.5 L23.5,28 Z" fill="#ffffff"/></g><g transform="translate(2421.8,282.0)"><path d="M0,23.6 L17,23.6 L25.5,14.100000000000001 L8.5,14.100000000000001 Z" fill="#3d3d3d"/><path d="M0,21.8 L17,21.8 L25.5,12.3 L8.5,12.3 Z" fill="#86c9f6"/><path d="M0,17.6 L17,17.6 L25.5,8.100000000000001 L8.5,8.100000000000001 Z" fill="#3d3d3d"/><path d="M0,15.8 L17,15.8 L25.5,6.300000000000001 L8.5,6.300000000000001 Z" fill="#dadada"/><path d="M0,11.8 L17,11.8 L25.5,2.3 L8.5,2.3 Z" fill="#3d3d3d"/><path d="M0,10 L17,10 L25.5,0.5 L8.5,0.5 Z" fill="#dadada"/><path d="M15.6,29.4 L25,20" stroke="#3d3d3d" stroke-width="4"/><path d="M15.6,29.4 L25,20" stroke="#ffffff" stroke-width="2.2"/><path d="M29.1,16.9 L26.5,26 L20,19.5 Z" fill="#ffffff"/></g><g transform="translate(2467.9,282.8)"><path d="M0,12.2 L16.4,12.2 L28.099999999999998,0.0 L11.7,0.0 Z" fill="#dadada"/><path d="M23.10,10.50 L23.10,27.70 M30.55,14.80 L15.65,23.40 M30.55,23.40 L15.65,14.80 M23.10,24.43 L25.23,26.56 M23.10,24.43 L20.97,26.56 M18.48,21.77 L17.70,24.67 M18.48,21.77 L15.57,20.99 M18.48,16.43 L15.57,17.21 M18.48,16.43 L17.70,13.53 M23.10,13.77 L20.97,11.64 M23.10,13.77 L25.23,11.64 M27.72,16.43 L28.50,13.53 M27.72,16.43 L30.63,17.21 M27.72,21.77 L30.63,20.99 M27.72,21.77 L28.50,24.67 " stroke="#6fd6e0" stroke-width="2" fill="none"/></g><g transform="translate(2516.5,282.8)"><path d="M0,12.2 L16.4,12.2 L28.099999999999998,0.0 L11.7,0.0 Z" fill="#dadada"/><circle cx="24.4" cy="16" r="6.6" fill="#6fd6e0" stroke="#3d3d3d" stroke-width="1.2"/><path d="M21,22.5 L27.8,22.5 L27.8,25 Q27.8,28 24.4,28 Q21,28 21,25 Z" fill="#efefef"/></g><g transform="translate(2565,282.8)"><path d="M0,12.2 L16.4,12.2 L28.099999999999998,0.0 L11.7,0.0 Z" fill="#dadada"/><path d="M19.9,18 L19.9,14 A3.7,3.7 0 0 1 27.3,14 L27.3,18" fill="none" stroke="#3d3d3d" stroke-width="3.8"/><path d="M19.9,18 L19.9,14 A3.7,3.7 0 0 1 27.3,14 L27.3,18" fill="none" stroke="#6fd6e0" stroke-width="2"/><rect x="16.7" y="17.2" width="13.5" height="10.2" fill="#6fd6e0" stroke="#3d3d3d" stroke-width="1"/><rect x="22.9" y="19.5" width="1.6" height="4" fill="#3d3d3d"/></g><g transform="translate(2613,282.8)"><path d="M0,12.2 L16.4,12.2 L28.099999999999998,0.0 L11.7,0.0 Z" fill="#dadada"/><path d="M23.5,19 L23.5,14 A3.5,3.5 0 0 1 30.5,14 L30.5,17" fill="none" stroke="#3d3d3d" stroke-width="3.8"/><path d="M23.5,19 L23.5,14 A3.5,3.5 0 0 1 30.5,14 L30.5,17" fill="none" stroke="#f6c860" stroke-width="2"/><rect x="13" y="18" width="13.5" height="9.5" fill="#f6c860" stroke="#3d3d3d" stroke-width="1"/><rect x="19" y="20.5" width="1.6" height="4" fill="#3d3d3d"/></g><g transform="translate(2237,695)"><path d="M2,12 L17,12 L25,3.5 L10,3.5 Z" fill="none" stroke="#dadada" stroke-width="1.6"/><path d="M0,21 L15,21 L23,12.5 M0,27 L15,27 L23,18.5" fill="none" stroke="#dadada" stroke-width="1.6"/></g><g transform="translate(2296,693)"><path d="M3,10 L16,10 L24,2 L11,2 Z" fill="none" stroke="#dadada" stroke-width="1.6"/><path d="M1,16 L16,16 L24,8 M1,21 L14,21" fill="none" stroke="#dadada" stroke-width="1.6"/><rect x="14" y="15" width="18" height="14.5" fill="#3d3d3d"/><rect x="15" y="16" width="16" height="12.5" fill="#eaeaea"/><path d="M17.5,20.5 L19,20.5 M20.5,20.5 L28,20.5 M17.5,25 L19,25 M20.5,25 L28,25" stroke="#555" stroke-width="1.5"/></g><g transform="translate(2356,698)"><path d="M0,0 L9.5,0 L12.5,3 L21,3 L21,6 L5.5,6 L0,19 Z" fill="#dadada"/><path d="M6,7.5 L26,7.5 L20.5,20.5 L0.5,20.5 Z" fill="#dadada"/></g><g transform="translate(2416,698)"><path d="M0,0 L9.5,0 L12.5,3 L21,3 L21,6 L5.5,6 L0,19 Z" fill="#dadada"/><path d="M6,7.5 L26,7.5 L20.5,20.5 L0.5,20.5 Z" fill="#dadada"/><path d="M15,9 L9,15 L13,15 L10,20 L17,13 L13,13 Z" fill="#4a4a4a"/></g><g transform="translate(2554,706)"><rect x="0" y="0" width="16" height="3.6" fill="#8a8a8a"/></g><g transform="translate(2603,699)"><rect x="1" y="1" width="18" height="16" fill="none" stroke="#dadada" stroke-width="2"/><path d="M7,1 L7,17 M13,1 L13,17" stroke="#dadada" stroke-width="2"/><path d="M25,6 L35,6 L30,11.5 Z" fill="#dadada"/></g><g transform="translate(2580.5,802)"><rect x="1" y="1" width="19" height="23" fill="none" stroke="#c8c8c8" stroke-width="1.8"/><path d="M4.5,6 L16,6 M4.5,10 L16,10 M4.5,14 L12,14" stroke="#c8c8c8" stroke-width="1.8"/><g transform="translate(11.5,27) rotate(-45)"><path d="M0,0 L4,-3.3 L4,3.3 Z" fill="#c8c8c8"/><rect x="4" y="-3.3" width="14" height="6.6" fill="#c8c8c8" stroke="#535353" stroke-width="1"/></g></g><path d="M133,181 L159,181 M159,181 L159,199 L133,199 L133,181" fill="none" stroke="#b8b8b8" stroke-width="1.8"/><rect x="154.5" y="178.5" width="5.5" height="5.5" fill="#535353" stroke="#b8b8b8" stroke-width="1.6"/><rect x="130.5" y="196" width="5.5" height="5.5" fill="#535353" stroke="#b8b8b8" stroke-width="1.6"/><path d="M201,185 L207.5,177 L228.5,177 L228.5,196 L222,204 L201,204 Z M201,185 L222,185 L222,204 M222,185 L228.5,177 M207.5,177 L207.5,196 L201,204 M207.5,196 L228.5,196" fill="none" stroke="#b8b8b8" stroke-width="1.6"/><path d="M264.5,185 L269.5,190 L264.5,195 M271.5,185 L276.5,190 L271.5,195" fill="none" stroke="#9e9e9e" stroke-width="1.4"/><rect x="302" y="178" width="14" height="14" fill="#86cdf8" /><rect x="318" y="180" width="12.3" height="12" fill="#dcdcdc" /><rect x="304" y="194" width="12" height="12" fill="#dcdcdc" /><rect x="318" y="194" width="12.3" height="12" fill="#dcdcdc" /><path d="M353,192 L375,192 M364,181 L364,203" stroke="#dcdcdc" stroke-width="1.8"/><rect x="292" y="1569.5" width="2380" height="2.5" fill="#464646" /><rect x="112" y="1572" width="180" height="45" fill="#535353" /><rect x="294" y="1572" width="1313" height="45" fill="#505050" /><rect x="1607" y="1572" width="1065" height="45" fill="#535353" /><rect x="1606.5" y="1572" width="1.5" height="45" fill="#444444" /><rect x="294" y="1572" width="118" height="44" fill="#6d6d6d" /><rect x="412" y="1572" width="2" height="44" fill="#454545" /><rect x="458" y="1572" width="2" height="44" fill="#454545" /><rect x="576" y="1572" width="1.5" height="44" fill="#454545" /><rect x="694" y="1572" width="1.5" height="44" fill="#454545" /><rect x="414" y="1572" width="44" height="44" fill="#4b4b4b" /><text x="319" y="1602.3" font-family="Liberation Sans" font-size="21.5" fill="#f2f2f2" textLength="61.7" lengthAdjust="spacingAndGlyphs" >Model</text><path d="M424.8,1594 L447,1594 M435.9,1582.9 L435.9,1605" stroke="#dcdcdc" stroke-width="1.9"/><text x="477.5" y="1602.3" font-family="Liberation Sans" font-size="21.5" fill="#bdbdbd" textLength="77.7" lengthAdjust="spacingAndGlyphs" >Layout1</text><text x="594.5" y="1602.3" font-family="Liberation Sans" font-size="21.5" fill="#bdbdbd" textLength="79.1" lengthAdjust="spacingAndGlyphs" >Layout2</text><rect x="294" y="1616" width="2378" height="1.5" fill="#474747" /><text x="1637.4" y="1602" font-family="Liberation Sans" font-size="23" fill="#c6c6c6" textLength="296.6" lengthAdjust="spacingAndGlyphs" >143.3021, 39.9952, 0.0000</text><path d="M1947,1585.9 L1977,1585.9 M1947,1594 L1977,1594 M1947,1602 L1977,1602 M1953.8,1578.9 L1953.8,1609 M1961.9,1578.9 L1961.9,1609 M1969.9,1578.9 L1969.9,1609" stroke="#dcdcdc" stroke-width="2"/><rect x="1993.6" y="1581.8" width="4.4" height="4.4" fill="#dcdcdc" /><rect x="1993.6" y="1591.8" width="4.4" height="4.4" fill="#dcdcdc" /><rect x="1993.6" y="1601.8" width="4.4" height="4.4" fill="#dcdcdc" /><rect x="2003.7" y="1581.8" width="4.4" height="4.4" fill="#dcdcdc" /><rect x="2003.7" y="1591.8" width="4.4" height="4.4" fill="#dcdcdc" /><rect x="2003.7" y="1601.8" width="4.4" height="4.4" fill="#dcdcdc" /><rect x="2013.7" y="1581.8" width="4.4" height="4.4" fill="#dcdcdc" /><rect x="2013.7" y="1591.8" width="4.4" height="4.4" fill="#dcdcdc" /><rect x="2013.7" y="1601.8" width="4.4" height="4.4" fill="#dcdcdc" /><path d="M2035,1578 L2035,1609 L2066,1609 M2035,1598.8 L2045.2,1598.8 L2045.2,1609" fill="none" stroke="#dcdcdc" stroke-width="2"/><circle cx="2090.8" cy="1594.9" r="12.2" fill="none" stroke="#dcdcdc" stroke-width="2"/><path d="M2105.4,1580.6 L2090.8,1594.9 L2109.8,1594.9" fill="none" stroke="#dcdcdc" stroke-width="2"/><rect x="2118" y="1574.2" width="40" height="39.5" fill="#6193c1" /><rect x="2162" y="1574.2" width="40" height="39.5" fill="#6193c1" /><rect x="2206" y="1574.2" width="40" height="39.5" fill="#6193c1" /><rect x="2250" y="1574.2" width="40" height="39.5" fill="#6193c1" /><rect x="2338" y="1574.2" width="40" height="39.5" fill="#6193c1" /><rect x="2382" y="1574.2" width="40" height="39.5" fill="#6193c1" /><path d="M2122,1589 L2136,1589 M2129,1582 L2129,1596" stroke="#ffffff" stroke-width="2"/><rect x="2134" y="1598" width="20" height="8" fill="#ffffff"/><rect x="2136" y="1600" width="1.6" height="4" fill="#6193c1"/><rect x="2166" y="1580.9" width="16.3" height="4" fill="#ffffff"/><rect x="2166" y="1580.9" width="32" height="2.2" fill="#ffffff"/><rect x="2166" y="1588.7" width="16.3" height="6.2" fill="#ffffff"/><rect x="2166" y="1588.7" width="32" height="2.2" fill="#ffffff"/><rect x="2166" y="1599.2" width="16.3" height="8" fill="#ffffff"/><rect x="2166" y="1599.2" width="32" height="2.2" fill="#ffffff"/><rect x="2213" y="1581" width="26" height="26" fill="none" stroke="#ffffff" stroke-width="2"/><rect x="2216" y="1584" width="4" height="4" fill="#ffffff"/><rect x="2216" y="1592" width="4" height="4" fill="#ffffff"/><rect x="2216" y="1600" width="4" height="4" fill="#ffffff"/><rect x="2220" y="1588" width="4" height="4" fill="#ffffff"/><rect x="2220" y="1596" width="4" height="4" fill="#ffffff"/><rect x="2224" y="1584" width="4" height="4" fill="#ffffff"/><rect x="2224" y="1592" width="4" height="4" fill="#ffffff"/><rect x="2224" y="1600" width="4" height="4" fill="#ffffff"/><rect x="2228" y="1588" width="4" height="4" fill="#ffffff"/><rect x="2228" y="1596" width="4" height="4" fill="#ffffff"/><rect x="2232" y="1584" width="4" height="4" fill="#ffffff"/><rect x="2232" y="1592" width="4" height="4" fill="#ffffff"/><rect x="2232" y="1600" width="4" height="4" fill="#ffffff"/><path d="M2259,1580 L2257,1580 L2257,1606 L2261,1606 M2276,1580 L2277.5,1580 L2277.5,1592" fill="none" stroke="#ffffff" stroke-width="1.8"/><rect x="2263" y="1582.5" width="9" height="7" fill="#8bb4da" stroke="#ffffff" stroke-width="1.8"/><circle cx="2267" cy="1597" r="4.3" fill="#8bb4da" stroke="#ffffff" stroke-width="1.8"/><path d="M2275,1593 L2275,1607 L2278.5,1604 L2281,1609.5 L2283,1608.5 L2280.5,1603 L2285,1603 Z" fill="#ffffff"/><path d="M2298.7,1605 L2330,1605 M2298.7,1605 L2321,1582.8" fill="none" stroke="#dcdcdc" stroke-width="2"/><rect x="2308" y="1590" width="6" height="6" fill="#dcdcdc" transform="rotate(45 2311 1593)"/><path d="M2352,1582.5 L2373.5,1582.5 L2373.5,1609.4 L2346.6,1609.4 L2346.6,1591" fill="none" stroke="#ffffff" stroke-width="2"/><rect x="2342.5" y="1578.5" width="9" height="9" fill="none" stroke="#ffffff" stroke-width="2"/><path d="M2400.5,1578.5 L2395.3,1592.5 Q2397.3,1594.5 2396.7,1597.0 L2386.0,1610.3 L2397.0,1605.0 Q2400.5,1600.5 2404.0,1605.0 L2414.5,1610.3 L2404.3,1597.0 Q2403.7,1594.5 2405.7,1592.5 Z" fill="#ffffff"/><circle cx="2412" cy="1586.3" r="6" fill="#ffffff"/><path d="M2444.3,1578.3 L2439.1000000000004,1592.3 Q2441.1000000000004,1594.3 2440.5,1596.8 L2429.8,1610.1 L2440.8,1604.8 Q2444.3,1600.3 2447.8,1604.8 L2458.3,1610.1 L2448.1000000000004,1596.8 Q2447.5,1594.3 2449.5,1592.3 Z" fill="#dcdcdc"/><path d="M2457,1578.3 L2451,1587 L2455,1587 L2452.5,1594 L2461.6,1584.5 L2457.5,1584.5 L2460,1578.3 Z" fill="#f6c860"/><path d="M2490.2,1578.3 L2485.0,1592.3 Q2487.0,1594.3 2486.3999999999996,1596.8 L2475.7,1610.1 L2486.7,1604.8 Q2490.2,1600.3 2493.7,1604.8 L2504.2,1610.1 L2494.0,1596.8 Q2493.3999999999996,1594.3 2495.3999999999996,1592.3 Z" fill="#dcdcdc"/><text x="2512.9" y="1602.3" font-family="Liberation Sans" font-size="23" fill="#b5b5b5" textLength="29.7" lengthAdjust="spacingAndGlyphs" >1:1</text><path d="M2552.3,1590 L2564.2,1590 L2558.2,1597.7 Z" fill="#d0d0d0"/><rect x="2583" y="1579.3" width="12" height="12" fill="none" stroke="#dcdcdc" stroke-width="2"/><circle cx="2606.8" cy="1590.9" r="6" fill="none" stroke="#dcdcdc" stroke-width="2"/><path d="M2587.5,1609 L2603,1609 L2595.2,1597.5 Z" fill="none" stroke="#dcdcdc" stroke-width="2"/><path d="M2656.83,1592.43 L2656.83,1595.37 L2652.23,1597.04 L2651.42,1598.99 L2653.50,1603.42 L2651.42,1605.50 L2646.99,1603.42 L2645.04,1604.23 L2643.37,1608.83 L2640.43,1608.83 L2638.76,1604.23 L2636.81,1603.42 L2632.38,1605.50 L2630.30,1603.42 L2632.38,1598.99 L2631.57,1597.04 L2626.97,1595.37 L2626.97,1592.43 L2631.57,1590.76 L2632.38,1588.81 L2630.30,1584.38 L2632.38,1582.30 L2636.81,1584.38 L2638.76,1583.57 L2640.43,1578.97 L2643.37,1578.97 L2645.04,1583.57 L2646.99,1584.38 L2651.42,1582.30 L2653.50,1584.38 L2651.42,1588.81 L2652.23,1590.76 Z" fill="#dcdcdc"/><circle cx="2641.9" cy="1593.9" r="4.95" fill="#535353"/><path d="M143,1596 L165,1596 M154,1585 L154,1607" stroke="#dedede" stroke-width="2.4"/><path d="M201,1587.5 L226,1587.5 M206,1593 L226,1593 M201,1604.5 L226,1604.5" stroke="#d8d8d8" stroke-width="2"/><rect x="200" y="1596.5" width="17" height="4" fill="#d8d8d8"/><path d="M220,1600.5 L226,1600.5 L223,1596 Z" fill="#d8d8d8"/><!--ICONS-->
</svg></body></html>
